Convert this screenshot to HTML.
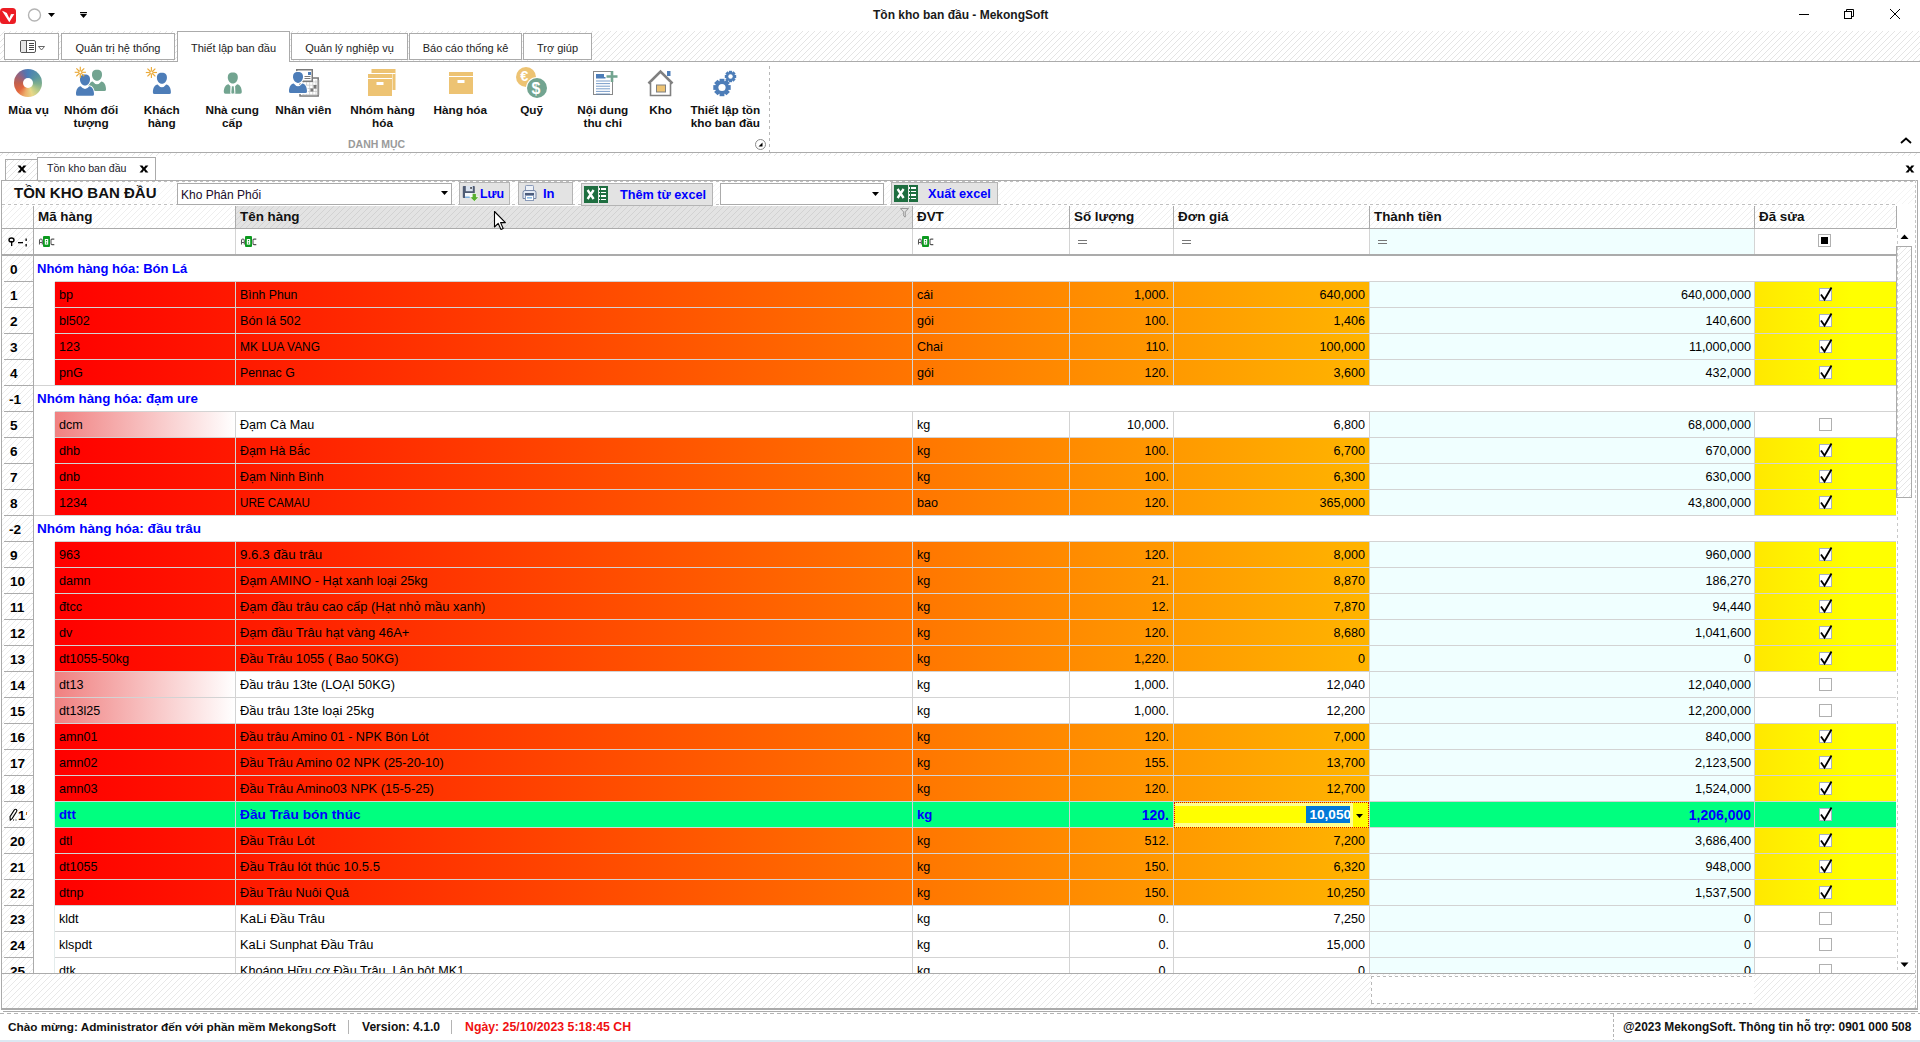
<!DOCTYPE html><html><head><meta charset="utf-8"><style>
*{margin:0;padding:0;box-sizing:border-box}
html,body{width:1920px;height:1042px;overflow:hidden;background:#fff;font-family:"Liberation Sans", sans-serif;}
body>div,body>svg{position:absolute}
.t{position:absolute;white-space:nowrap;line-height:14px;font-size:12px;color:#000}
.hatch{background-image:repeating-linear-gradient(135deg,rgba(0,0,0,0) 0px,rgba(0,0,0,0) 3.2px,#e6e6e6 3.2px,#e6e6e6 4.24px)}
</style></head><body><svg style="left:0;top:0" width="1920" height="30">
<rect x="0" y="8" width="16" height="16" rx="3.5" fill="#EC1C24"/>
<path d="M2 10.8 Q4.5 11.6 6.9 13.1 L9.3 18.3 L11 14.3 L9.6 14.3 L14.3 14.1 L9.3 22.2 Z" fill="#fff"/><path d="M7.2 13.3 L9.6 14.2 L9.6 16.6 Z" fill="#EC1C24"/>
<circle cx="34.5" cy="15" r="6" fill="none" stroke="#B4B4B4" stroke-width="1.4"/>
<path d="M48 13 L55 13 L51.5 17 Z" fill="#000"/>
<rect x="80" y="12" width="7" height="1.2" fill="#000"/>
<path d="M80 14 L87 14 L83.5 18 Z" fill="#000"/>
<rect x="1799" y="14" width="10" height="1" fill="#000"/>
<rect x="1844.5" y="11.5" width="7" height="7" fill="none" stroke="#000" stroke-width="1"/>
<path d="M1846.5 11.5 V9.5 H1853.5 V16.5 H1851.5" fill="none" stroke="#000" stroke-width="1"/>
<path d="M1890 9 L1900 19 M1900 9 L1890 19" stroke="#000" stroke-width="1"/>
</svg>
<div class="t" style="left:873px;top:7px;font-size:12px;font-weight:bold;color:#1a1a1a;line-height:16px">Tồn kho ban đầu - MekongSoft</div>
<div style="left:0px;top:31px;width:1920px;height:30px;background:#fff"></div>
<svg style="position:absolute;left:0px;top:31px" width="1920" height="30" shape-rendering="crispEdges"><defs><pattern id="hp1" patternUnits="userSpaceOnUse" x="0" y="5" width="6" height="6"><g fill="#e4e4e4"><rect x="5" y="0" width="1" height="1"/><rect x="4" y="1" width="1" height="1"/><rect x="3" y="2" width="1" height="1"/><rect x="2" y="3" width="1" height="1"/><rect x="1" y="4" width="1" height="1"/><rect x="0" y="5" width="1" height="1"/></g></pattern></defs><rect width="1920" height="30" fill="url(#hp1)"/></svg>
<div style="left:0px;top:61px;width:1920px;height:1px;background:#ABABAB"></div>
<div style="left:4px;top:33px;width:55px;height:27px;background:#fff;border:1px solid #ABABAB"></div>
<div style="left:61px;top:33px;width:114px;height:27px;background:#fff;border:1px solid #ABABAB"></div>
<div class="t" style="left:61px;width:114px;top:41px;text-align:center;font-size:11px;color:#222">Quản trị hệ thống</div>
<div style="left:177px;top:31px;width:113px;height:31px;background:#fff;border:1px solid #ABABAB;border-bottom:none"></div>
<div class="t" style="left:177px;width:113px;top:41px;text-align:center;font-size:11px;color:#222">Thiết lập ban đầu</div>
<div style="left:291px;top:33px;width:117px;height:27px;background:#fff;border:1px solid #ABABAB"></div>
<div class="t" style="left:291px;width:117px;top:41px;text-align:center;font-size:11px;color:#222">Quản lý nghiệp vụ</div>
<div style="left:409px;top:33px;width:113px;height:27px;background:#fff;border:1px solid #ABABAB"></div>
<div class="t" style="left:409px;width:113px;top:41px;text-align:center;font-size:11px;color:#222">Báo cáo thống kê</div>
<div style="left:523px;top:33px;width:69px;height:27px;background:#fff;border:1px solid #ABABAB"></div>
<div class="t" style="left:523px;width:69px;top:41px;text-align:center;font-size:11px;color:#222">Trợ giúp</div>
<svg style="left:0;top:31px" width="60" height="30">
<rect x="20.5" y="9.5" width="15" height="12" rx="1.5" fill="#fff" stroke="#555" stroke-width="1"/>
<rect x="21" y="10" width="5" height="11" fill="#e6e6e6"/>
<line x1="26.5" y1="10" x2="26.5" y2="21" stroke="#555"/>
<path d="M29 12.5h5M29 14.5h5M29 16.5h5M29 18.5h5" stroke="#444" stroke-width="1"/>
<path d="M38.5 15.5 L44.5 15.5 L41.5 19 Z" fill="none" stroke="#555" stroke-width="0.9"/>
</svg>
<div style="left:0px;top:152px;width:1920px;height:1px;background:#ABABAB"></div>
<div style="left:769px;top:66px;width:1px;height:86px;background-image:repeating-linear-gradient(180deg,#b8b8b8 0 3px,transparent 3px 6px)"></div>
<svg style="left:752px;top:136px" width="18" height="18">
<circle cx="8.5" cy="8.5" r="5" fill="#fff" stroke="#8a8a8a" stroke-width="1"/>
<path d="M6.5 10.5 L10.5 10.5 L10.5 6.5 Z" fill="#000"/>
</svg>
<svg style="left:1898px;top:134px" width="16" height="12">
<path d="M3 9 L8 4.5 L13 9" fill="none" stroke="#000" stroke-width="1.8"/>
</svg>
<div class="t" style="left:-31.4px;width:120px;top:103px;text-align:center;font-weight:bold;font-size:11.75px;line-height:14px;color:#111">Mùa vụ</div>
<div class="t" style="left:31.099999999999994px;width:120px;top:103px;text-align:center;font-weight:bold;font-size:11.75px;line-height:14px;color:#111">Nhóm đối</div>
<div class="t" style="left:31.099999999999994px;width:120px;top:116px;text-align:center;font-weight:bold;font-size:11.75px;line-height:14px;color:#111">tượng</div>
<div class="t" style="left:101.69999999999999px;width:120px;top:103px;text-align:center;font-weight:bold;font-size:11.75px;line-height:14px;color:#111">Khách</div>
<div class="t" style="left:101.69999999999999px;width:120px;top:116px;text-align:center;font-weight:bold;font-size:11.75px;line-height:14px;color:#111">hàng</div>
<div class="t" style="left:172.2px;width:120px;top:103px;text-align:center;font-weight:bold;font-size:11.75px;line-height:14px;color:#111">Nhà cung</div>
<div class="t" style="left:172.2px;width:120px;top:116px;text-align:center;font-weight:bold;font-size:11.75px;line-height:14px;color:#111">cấp</div>
<div class="t" style="left:243.39999999999998px;width:120px;top:103px;text-align:center;font-weight:bold;font-size:11.75px;line-height:14px;color:#111">Nhân viên</div>
<div class="t" style="left:322.5px;width:120px;top:103px;text-align:center;font-weight:bold;font-size:11.75px;line-height:14px;color:#111">Nhóm hàng</div>
<div class="t" style="left:322.5px;width:120px;top:116px;text-align:center;font-weight:bold;font-size:11.75px;line-height:14px;color:#111">hóa</div>
<div class="t" style="left:400.3px;width:120px;top:103px;text-align:center;font-weight:bold;font-size:11.75px;line-height:14px;color:#111">Hàng hóa</div>
<div class="t" style="left:471.6px;width:120px;top:103px;text-align:center;font-weight:bold;font-size:11.75px;line-height:14px;color:#111">Quỹ</div>
<div class="t" style="left:542.8px;width:120px;top:103px;text-align:center;font-weight:bold;font-size:11.75px;line-height:14px;color:#111">Nội dung</div>
<div class="t" style="left:542.8px;width:120px;top:116px;text-align:center;font-weight:bold;font-size:11.75px;line-height:14px;color:#111">thu chi</div>
<div class="t" style="left:600.6px;width:120px;top:103px;text-align:center;font-weight:bold;font-size:11.75px;line-height:14px;color:#111">Kho</div>
<div class="t" style="left:665.3px;width:120px;top:103px;text-align:center;font-weight:bold;font-size:11.75px;line-height:14px;color:#111">Thiết lập tồn</div>
<div class="t" style="left:665.3px;width:120px;top:116px;text-align:center;font-weight:bold;font-size:11.75px;line-height:14px;color:#111">kho ban đầu</div>
<div class="t" style="left:348px;top:137px;font-weight:bold;font-size:10.5px;color:#9a9a9a;line-height:14px">DANH MỤC</div>
<div style="left:14px;top:69px;width:28px;height:28px;border-radius:50%;background:conic-gradient(#4A7DB8 0deg,#5A96A0 55deg,#7EAE8E 95deg,#BACB88 130deg,#E8D888 160deg,#EDAE6A 195deg,#E2663E 230deg,#C2604E 270deg,#8E6486 315deg,#5E70A8 340deg,#4A7DB8 360deg)"></div>
<div style="left:23px;top:78px;width:10px;height:10px;border-radius:50%;background:#fff"></div>
<svg style="left:0;top:62px" width="780" height="50"><path d="M97.00 7.80 C100.60 7.80 102.00 9.70 102.00 12.70 C102.00 15.80 99.80 18.80 97.00 18.80 C94.20 18.80 92.00 15.80 92.00 12.70 C92.00 9.70 93.40 7.80 97.00 7.80 Z" fill="#72A490"/><path d="M88.00 27.40 Q88.00 29.00 89.60 29.00 L104.40 29.00 Q106.00 29.00 106.00 27.40 C106.00 23.20 104.20 19.70 101.30 19.50 Q97.00 25.00 92.70 19.50 C89.80 19.70 88.00 23.20 88.00 27.40 Z" fill="#72A490"/><path d="M85.00 12.60 C88.60 12.60 90.00 14.50 90.00 17.50 C90.00 20.60 87.80 23.60 85.00 23.60 C82.20 23.60 80.00 20.60 80.00 17.50 C80.00 14.50 81.40 12.60 85.00 12.60 Z" fill="#fff" stroke="#fff" stroke-width="2"/><path d="M76.00 32.20 Q76.00 33.80 77.60 33.80 L92.40 33.80 Q94.00 33.80 94.00 32.20 C94.00 28.00 92.20 24.50 89.30 24.30 Q85.00 29.80 80.70 24.30 C77.80 24.50 76.00 28.00 76.00 32.20 Z" fill="#fff" stroke="#fff" stroke-width="2"/><path d="M85.00 12.60 C88.60 12.60 90.00 14.50 90.00 17.50 C90.00 20.60 87.80 23.60 85.00 23.60 C82.20 23.60 80.00 20.60 80.00 17.50 C80.00 14.50 81.40 12.60 85.00 12.60 Z" fill="#4D7DB8"/><path d="M76.00 32.20 Q76.00 33.80 77.60 33.80 L92.40 33.80 Q94.00 33.80 94.00 32.20 C94.00 28.00 92.20 24.50 89.30 24.30 Q85.00 29.80 80.70 24.30 C77.80 24.50 76.00 28.00 76.00 32.20 Z" fill="#4D7DB8"/><line x1="82.10" y1="10.30" x2="85.90" y2="10.30" stroke="#EAAA3A" stroke-width="1.15"/><line x1="81.57" y1="11.57" x2="84.26" y2="14.26" stroke="#EAAA3A" stroke-width="1.15"/><line x1="80.30" y1="12.10" x2="80.30" y2="15.90" stroke="#EAAA3A" stroke-width="1.15"/><line x1="79.03" y1="11.57" x2="76.34" y2="14.26" stroke="#EAAA3A" stroke-width="1.15"/><line x1="78.50" y1="10.30" x2="74.70" y2="10.30" stroke="#EAAA3A" stroke-width="1.15"/><line x1="79.03" y1="9.03" x2="76.34" y2="6.34" stroke="#EAAA3A" stroke-width="1.15"/><line x1="80.30" y1="8.50" x2="80.30" y2="4.70" stroke="#EAAA3A" stroke-width="1.15"/><line x1="81.57" y1="9.03" x2="84.26" y2="6.34" stroke="#EAAA3A" stroke-width="1.15"/><circle cx="80.3" cy="10.299999999999997" r="2.1" fill="#EAAA3A"/><circle cx="80.3" cy="10.299999999999997" r="1.1" fill="#fff"/><path d="M161.90 10.80 C165.50 10.80 166.90 12.70 166.90 15.70 C166.90 18.80 164.70 21.80 161.90 21.80 C159.10 21.80 156.90 18.80 156.90 15.70 C156.90 12.70 158.30 10.80 161.90 10.80 Z" fill="#4D7DB8"/><path d="M152.90 30.40 Q152.90 32.00 154.50 32.00 L169.30 32.00 Q170.90 32.00 170.90 30.40 C170.90 26.20 169.10 22.70 166.20 22.50 Q161.90 28.00 157.60 22.50 C154.70 22.70 152.90 26.20 152.90 30.40 Z" fill="#4D7DB8"/><line x1="153.20" y1="10.50" x2="157.00" y2="10.50" stroke="#EAAA3A" stroke-width="1.15"/><line x1="152.67" y1="11.77" x2="155.36" y2="14.46" stroke="#EAAA3A" stroke-width="1.15"/><line x1="151.40" y1="12.30" x2="151.40" y2="16.10" stroke="#EAAA3A" stroke-width="1.15"/><line x1="150.13" y1="11.77" x2="147.44" y2="14.46" stroke="#EAAA3A" stroke-width="1.15"/><line x1="149.60" y1="10.50" x2="145.80" y2="10.50" stroke="#EAAA3A" stroke-width="1.15"/><line x1="150.13" y1="9.23" x2="147.44" y2="6.54" stroke="#EAAA3A" stroke-width="1.15"/><line x1="151.40" y1="8.70" x2="151.40" y2="4.90" stroke="#EAAA3A" stroke-width="1.15"/><line x1="152.67" y1="9.23" x2="155.36" y2="6.54" stroke="#EAAA3A" stroke-width="1.15"/><circle cx="151.4" cy="10.5" r="2.1" fill="#EAAA3A"/><circle cx="151.4" cy="10.5" r="1.1" fill="#fff"/><path d="M232.80 10.50 C236.40 10.50 237.80 12.40 237.80 15.40 C237.80 18.50 235.60 21.50 232.80 21.50 C230.00 21.50 227.80 18.50 227.80 15.40 C227.80 12.40 229.20 10.50 232.80 10.50 Z" fill="#72A490"/><path d="M223.80 30.10 Q223.80 31.70 225.40 31.70 L240.20 31.70 Q241.80 31.70 241.80 30.10 C241.80 25.90 240.00 22.40 237.10 22.20 Q232.80 27.70 228.50 22.20 C225.60 22.40 223.80 25.90 223.80 30.10 Z" fill="#72A490"/><path d="M230.50 23.10 L235.10 23.10 L235.40 31.70 L230.20 31.70 Z" fill="#fff"/><path d="M231.90 24.30 L233.70 24.30 L234.30 30.70 L232.80 31.70 L231.30 30.70 Z" fill="#72A490"/><rect x="300" y="16" width="18.2" height="18" fill="#fff" stroke="#7a7a7a" stroke-width="1.5"/><rect x="303.2" y="18" width="0.7" height="15" fill="#c8c8c8"/><rect x="306.3" y="18" width="0.7" height="15" fill="#c8c8c8"/><rect x="309.4" y="18" width="0.7" height="15" fill="#c8c8c8"/><rect x="312.5" y="18" width="0.7" height="15" fill="#c8c8c8"/><rect x="315.6" y="18" width="0.7" height="15" fill="#c8c8c8"/><rect x="318.7" y="18" width="0.7" height="15" fill="#c8c8c8"/><rect x="302" y="19.6" width="15" height="0.7" fill="#c8c8c8"/><rect x="302" y="22.8" width="15" height="0.7" fill="#c8c8c8"/><rect x="302" y="26.0" width="15" height="0.7" fill="#c8c8c8"/><rect x="302" y="29.2" width="15" height="0.7" fill="#c8c8c8"/><rect x="302" y="32.4" width="15" height="0.7" fill="#c8c8c8"/><rect x="313.5" y="23" width="3" height="3.5" fill="#777"/><rect x="310.4" y="26.5" width="3" height="3" fill="#777"/><rect x="296.75" y="7.75" width="15.5" height="11.5" fill="#fff" stroke="#7a7a7a" stroke-width="1.5"/><rect x="307.5" y="9.5" width="3" height="3" fill="#4D7DB8" shape-rendering="crispEdges"/><path d="M304.5 14.5h6M304.5 16.5h6" stroke="#7a7a7a" stroke-width="1"/><path d="M298.00 9.90 C301.60 9.90 303.00 11.80 303.00 14.80 C303.00 17.90 300.80 20.90 298.00 20.90 C295.20 20.90 293.00 17.90 293.00 14.80 C293.00 11.80 294.40 9.90 298.00 9.90 Z" fill="#fff" stroke="#fff" stroke-width="2"/><path d="M289.00 29.50 Q289.00 31.10 290.60 31.10 L305.40 31.10 Q307.00 31.10 307.00 29.50 C307.00 25.30 305.20 21.80 302.30 21.60 Q298.00 27.10 293.70 21.60 C290.80 21.80 289.00 25.30 289.00 29.50 Z" fill="#fff" stroke="#fff" stroke-width="2"/><path d="M298.00 9.90 C301.60 9.90 303.00 11.80 303.00 14.80 C303.00 17.90 300.80 20.90 298.00 20.90 C295.20 20.90 293.00 17.90 293.00 14.80 C293.00 11.80 294.40 9.90 298.00 9.90 Z" fill="#4D7DB8"/><path d="M289.00 29.50 Q289.00 31.10 290.60 31.10 L305.40 31.10 Q307.00 31.10 307.00 29.50 C307.00 25.30 305.20 21.80 302.30 21.60 Q298.00 27.10 293.70 21.60 C290.80 21.80 289.00 25.30 289.00 29.50 Z" fill="#4D7DB8"/><rect x="371.5" y="7" width="24" height="21" fill="#EDC373"/><rect x="371.5" y="11" width="24" height="1" fill="#fff"/><rect x="367" y="11" width="25.5" height="24" fill="#fff"/><rect x="368" y="12" width="24" height="4" fill="#EDC373"/><rect x="368" y="17" width="24" height="17" fill="#EDC373"/><rect x="376.5" y="20" width="7" height="3" fill="#fff"/><rect x="449" y="10" width="24" height="4" fill="#EDC373"/><rect x="449" y="15" width="24" height="17" fill="#EDC373"/><rect x="457.5" y="18" width="7" height="3" fill="#fff"/><circle cx="526" cy="15" r="10" fill="#EDC373"/><text x="520.3" y="19.299999999999997" font-family="Liberation Sans" font-weight="bold" font-size="14.5" fill="#fff">€</text><circle cx="537" cy="26" r="11" fill="#fff"/><circle cx="537" cy="26" r="10" fill="#72A490"/><text x="531.6" y="32.2" font-family="Liberation Sans" font-weight="bold" font-size="16" fill="#fff">$</text><rect x="593.5" y="9.5" width="19" height="23" fill="#fff" stroke="#888" stroke-width="1"/><rect x="596" y="12" width="9.5" height="4.5" fill="#4D7DB8"/><rect x="596" y="18.5" width="14" height="1" fill="#4D7DB8" opacity="0.75"/><rect x="596" y="21.1" width="14" height="1" fill="#4D7DB8" opacity="0.75"/><rect x="596" y="23.7" width="14" height="1" fill="#4D7DB8" opacity="0.75"/><rect x="596" y="26.3" width="14" height="1" fill="#4D7DB8" opacity="0.75"/><rect x="596" y="28.9" width="14" height="1" fill="#4D7DB8" opacity="0.75"/><rect x="596" y="31.5" width="14" height="1" fill="#4D7DB8" opacity="0.75"/><rect x="604" y="11" width="14" height="4" fill="#fff"/><path d="M606.5 14.5 h11 M612 9 v11" stroke="#72A490" stroke-width="2.6"/><rect x="667" y="9" width="3.5" height="5" fill="#4D7DB8"/><path d="M648.5 21.5 L660.5 9.5 L672.5 21.5" fill="none" stroke="#808080" stroke-width="2.6" stroke-linejoin="miter"/><path d="M650.5 20 V33.5 H670.5 V20" fill="#fff" stroke="#808080" stroke-width="1.6"/><rect x="656.5" y="23" width="9" height="7" fill="#EDC373" stroke="#808080" stroke-width="1"/><rect x="719.59" y="16.80" width="4.82" height="5.16" fill="#4D7DB8" transform="rotate(0.0 722 25.5)"/><rect x="719.59" y="16.80" width="4.82" height="5.16" fill="#4D7DB8" transform="rotate(45.0 722 25.5)"/><rect x="719.59" y="16.80" width="4.82" height="5.16" fill="#4D7DB8" transform="rotate(90.0 722 25.5)"/><rect x="719.59" y="16.80" width="4.82" height="5.16" fill="#4D7DB8" transform="rotate(135.0 722 25.5)"/><rect x="719.59" y="16.80" width="4.82" height="5.16" fill="#4D7DB8" transform="rotate(180.0 722 25.5)"/><rect x="719.59" y="16.80" width="4.82" height="5.16" fill="#4D7DB8" transform="rotate(225.0 722 25.5)"/><rect x="719.59" y="16.80" width="4.82" height="5.16" fill="#4D7DB8" transform="rotate(270.0 722 25.5)"/><rect x="719.59" y="16.80" width="4.82" height="5.16" fill="#4D7DB8" transform="rotate(315.0 722 25.5)"/><circle cx="722" cy="25.5" r="6.71" fill="#4D7DB8"/><circle cx="722" cy="25.5" r="3.60" fill="#fff"/><rect x="728.93" y="8.80" width="3.14" height="3.36" fill="#4D7DB8" transform="rotate(0.0 730.5 14.5)"/><rect x="728.93" y="8.80" width="3.14" height="3.36" fill="#4D7DB8" transform="rotate(45.0 730.5 14.5)"/><rect x="728.93" y="8.80" width="3.14" height="3.36" fill="#4D7DB8" transform="rotate(90.0 730.5 14.5)"/><rect x="728.93" y="8.80" width="3.14" height="3.36" fill="#4D7DB8" transform="rotate(135.0 730.5 14.5)"/><rect x="728.93" y="8.80" width="3.14" height="3.36" fill="#4D7DB8" transform="rotate(180.0 730.5 14.5)"/><rect x="728.93" y="8.80" width="3.14" height="3.36" fill="#4D7DB8" transform="rotate(225.0 730.5 14.5)"/><rect x="728.93" y="8.80" width="3.14" height="3.36" fill="#4D7DB8" transform="rotate(270.0 730.5 14.5)"/><rect x="728.93" y="8.80" width="3.14" height="3.36" fill="#4D7DB8" transform="rotate(315.0 730.5 14.5)"/><circle cx="730.5" cy="14.5" r="4.37" fill="#4D7DB8"/><circle cx="730.5" cy="14.5" r="2.20" fill="#fff"/></svg>
<svg style="position:absolute;left:0px;top:153px" width="1920" height="3" shape-rendering="crispEdges"><defs><pattern id="hp2" patternUnits="userSpaceOnUse" x="0" y="3" width="6" height="6"><g fill="#e4e4e4"><rect x="5" y="0" width="1" height="1"/><rect x="4" y="1" width="1" height="1"/><rect x="3" y="2" width="1" height="1"/><rect x="2" y="3" width="1" height="1"/><rect x="1" y="4" width="1" height="1"/><rect x="0" y="5" width="1" height="1"/></g></pattern></defs><rect width="1920" height="3" fill="url(#hp2)"/></svg>
<svg style="position:absolute;left:6px;top:160px" width="31" height="20" shape-rendering="crispEdges"><defs><pattern id="hp3" patternUnits="userSpaceOnUse" x="0" y="2" width="6" height="6"><g fill="#e4e4e4"><rect x="5" y="0" width="1" height="1"/><rect x="4" y="1" width="1" height="1"/><rect x="3" y="2" width="1" height="1"/><rect x="2" y="3" width="1" height="1"/><rect x="1" y="4" width="1" height="1"/><rect x="0" y="5" width="1" height="1"/></g></pattern></defs><rect width="31" height="20" fill="url(#hp3)"/></svg>
<div style="left:5px;top:159px;width:33px;height:22px;border:1px solid #ABABAB;border-bottom:none"></div>
<div style="left:37px;top:157px;width:119px;height:24px;background:#fff;border:1px solid #ABABAB;border-bottom:none"></div>
<div class="t" style="left:47px;top:161px;font-size:10.6px;color:#1a1a2a">Tồn kho ban đầu</div>
<svg style="left:17px;top:165px" width="11" height="9"><path d="M0.5 0.5 H3.4 L4.95 2.55 L6.5 0.5 H9.4 L6.4 3.9 L9.4 7.4 H6.5 L4.95 5.3 L3.4 7.4 H0.5 L3.5 3.9 Z" fill="#000"/></svg>
<svg style="left:139px;top:165px" width="11" height="9"><path d="M0.5 0.5 H3.4 L4.95 2.55 L6.5 0.5 H9.4 L6.4 3.9 L9.4 7.4 H6.5 L4.95 5.3 L3.4 7.4 H0.5 L3.5 3.9 Z" fill="#000"/></svg>
<svg style="left:1904.5px;top:164.5px" width="11" height="9"><path d="M0.5 0.5 H3.4 L4.95 2.55 L6.5 0.5 H9.4 L6.4 3.9 L9.4 7.4 H6.5 L4.95 5.3 L3.4 7.4 H0.5 L3.5 3.9 Z" fill="#000"/></svg>
<div style="left:1px;top:180px;width:1917px;height:830px;background:#fff;border:1px solid #ABABAB"></div>
<div style="left:1915px;top:180px;width:1px;height:830px;background-image:repeating-linear-gradient(180deg,#c8c8c8 0 3px,transparent 3px 5px)"></div>
<div style="left:38px;top:181px;width:1877px;height:1px;background-image:repeating-linear-gradient(90deg,#c0c0c0 0 3px,transparent 3px 6px)"></div>
<svg style="position:absolute;left:3px;top:182px" width="1912" height="22" shape-rendering="crispEdges"><defs><pattern id="hp4" patternUnits="userSpaceOnUse" x="3" y="4" width="6" height="6"><g fill="#f4f4f4"><rect x="5" y="0" width="1" height="1"/><rect x="4" y="1" width="1" height="1"/><rect x="3" y="2" width="1" height="1"/><rect x="2" y="3" width="1" height="1"/><rect x="1" y="4" width="1" height="1"/><rect x="0" y="5" width="1" height="1"/></g></pattern></defs><rect width="1912" height="22" fill="url(#hp4)"/></svg>
<div style="left:2px;top:204px;width:1894px;height:1px;background-image:repeating-linear-gradient(90deg,#c0c0c0 0 3px,transparent 3px 6px)"></div>
<div class="t" style="left:14px;top:184px;font-size:15px;font-weight:bold;line-height:18px;color:#111">TỒN KHO BAN ĐẦU</div>
<div style="left:177px;top:183px;width:275px;height:22px;background:#fff;border:1px solid #ABABAB"></div>
<div class="t" style="left:181px;top:188px;font-size:12px;color:#1a0a2a">Kho Phân Phối</div>
<svg style="left:440px;top:190px" width="10" height="6"><path d="M1 1 L8 1 L4.5 5 Z" fill="#000"/></svg>
<div style="left:459px;top:182px;width:51px;height:23px;background:#E3E3E3;border:1px solid #B4B4B4"></div>
<div style="left:518px;top:182px;width:55px;height:23px;background:#E3E3E3;border:1px solid #B4B4B4"></div>
<div style="left:581px;top:183px;width:132px;height:23px;background:#E3E3E3;border:1px solid #B4B4B4"></div>
<div style="left:891px;top:182px;width:107px;height:23px;background:#E3E3E3;border:1px solid #B4B4B4"></div>
<div style="left:720px;top:183px;width:164px;height:22px;background:#fff;border:1px solid #ABABAB"></div>
<svg style="left:871px;top:191px" width="10" height="6"><path d="M1 1 L8 1 L4.5 5 Z" fill="#000"/></svg>
<div class="t" style="left:480px;top:186px;font-size:12.4px;font-weight:bold;color:#0000FF;line-height:16px">Lưu</div>
<div class="t" style="left:543px;top:186px;font-size:13px;font-weight:bold;color:#0000FF;line-height:16px">In</div>
<div class="t" style="left:620px;top:187px;font-size:12.7px;font-weight:bold;color:#0000FF;line-height:16px">Thêm từ excel</div>
<div class="t" style="left:928px;top:186px;font-size:12.7px;font-weight:bold;color:#0000FF;line-height:16px">Xuất excel</div>
<svg style="left:462px;top:185px" width="18" height="17">
<rect x="0.8" y="1" width="12" height="12" rx="0.8" fill="#4F5B73"/>
<rect x="3.8" y="1" width="7" height="5.2" fill="#DCE4F0"/>
<rect x="8.3" y="2.2" width="1.5" height="1.5" fill="#111"/>
<rect x="3" y="8" width="8" height="5" fill="#F4F8FC"/>
<rect x="3" y="11.5" width="5" height="1.5" fill="#7FB0E0"/>
<path d="M10.2 8.5 h4.2 v3.4 h2.6 l-4.7 4.6 l-4.7 -4.6 h2.6 z" fill="#58B030" stroke="#fff" stroke-width="0.7"/>
</svg>
<svg style="left:521px;top:184px" width="17" height="18">
<rect x="4.5" y="1.5" width="8" height="8" rx="0.8" fill="#EEF2F8" stroke="#8A9AB8" stroke-width="1"/>
<path d="M2 14.5 V8.5 Q2 6.5 4 6.5 H13 Q15 6.5 15 8.5 V14.5 Z" fill="#E4EAF4" stroke="#7686A6" stroke-width="1"/>
<rect x="4" y="9" width="9" height="2" fill="#4C5C7C"/>
<rect x="4.5" y="11.5" width="8" height="5" fill="#fff" stroke="#8A9AB8" stroke-width="1"/>
<rect x="6" y="13" width="5" height="1.6" fill="#8DBBE6"/>
</svg>
<svg style="left:584px;top:186px" width="26" height="19" shape-rendering="crispEdges">
<rect x="0" y="0" width="13.5" height="17" fill="#1E6E40"/>
<rect x="14.5" y="0" width="9.5" height="17" fill="#1E6E40"/>
<rect x="16.5" y="2" width="5.5" height="1.6" fill="#fff"/>
<rect x="16.5" y="5.6" width="5.5" height="1.6" fill="#fff"/>
<rect x="16.5" y="9.2" width="5.5" height="1.6" fill="#fff"/>
<rect x="16.5" y="12.8" width="5.5" height="1.6" fill="#fff"/>
<rect x="15" y="2" width="1" height="1.6" fill="#fff"/>
<rect x="15" y="5.6" width="1" height="1.6" fill="#fff"/>
<rect x="15" y="9.2" width="1" height="1.6" fill="#fff"/>
<rect x="15" y="12.8" width="1" height="1.6" fill="#fff"/>
<path d="M3.6 4 L9.6 13 M9.6 4 L3.6 13" stroke="#fff" stroke-width="2.3" shape-rendering="geometricPrecision"/>
</svg>
<svg style="left:894px;top:185px" width="26" height="19" shape-rendering="crispEdges">
<rect x="0" y="0" width="13.5" height="17" fill="#1E6E40"/>
<rect x="14.5" y="0" width="9.5" height="17" fill="#1E6E40"/>
<rect x="16.5" y="2" width="5.5" height="1.6" fill="#fff"/>
<rect x="16.5" y="5.6" width="5.5" height="1.6" fill="#fff"/>
<rect x="16.5" y="9.2" width="5.5" height="1.6" fill="#fff"/>
<rect x="16.5" y="12.8" width="5.5" height="1.6" fill="#fff"/>
<rect x="15" y="2" width="1" height="1.6" fill="#fff"/>
<rect x="15" y="5.6" width="1" height="1.6" fill="#fff"/>
<rect x="15" y="9.2" width="1" height="1.6" fill="#fff"/>
<rect x="15" y="12.8" width="1" height="1.6" fill="#fff"/>
<path d="M3.6 4 L9.6 13 M9.6 4 L3.6 13" stroke="#fff" stroke-width="2.3" shape-rendering="geometricPrecision"/>
</svg>
<svg style="position:absolute;left:2px;top:206px" width="1894" height="22" shape-rendering="crispEdges"><defs><pattern id="hp5" patternUnits="userSpaceOnUse" x="4" y="4" width="6" height="6"><g fill="#eeeeee"><rect x="5" y="0" width="1" height="1"/><rect x="4" y="1" width="1" height="1"/><rect x="3" y="2" width="1" height="1"/><rect x="2" y="3" width="1" height="1"/><rect x="1" y="4" width="1" height="1"/><rect x="0" y="5" width="1" height="1"/></g></pattern></defs><rect width="1894" height="22" fill="url(#hp5)"/></svg>
<svg style="position:absolute;left:236px;top:206px" width="676" height="22" shape-rendering="crispEdges"><defs><pattern id="hp6" patternUnits="userSpaceOnUse" x="4" y="4" width="6" height="6"><g fill="#d2d2d2"><rect x="5" y="0" width="1" height="1"/><rect x="4" y="1" width="1" height="1"/><rect x="3" y="2" width="1" height="1"/><rect x="2" y="3" width="1" height="1"/><rect x="1" y="4" width="1" height="1"/><rect x="0" y="5" width="1" height="1"/></g></pattern></defs><rect width="676" height="22" fill="#E3E3E3"/><rect width="676" height="22" fill="url(#hp6)"/></svg>
<div style="left:2px;top:228px;width:1894px;height:1px;background:#ABABAB"></div>
<div style="left:33px;top:206px;width:1px;height:22px;background:#ABABAB"></div>
<div style="left:235px;top:206px;width:1px;height:22px;background:#ABABAB"></div>
<div style="left:912px;top:206px;width:1px;height:22px;background:#ABABAB"></div>
<div style="left:1069px;top:206px;width:1px;height:22px;background:#ABABAB"></div>
<div style="left:1173px;top:206px;width:1px;height:22px;background:#ABABAB"></div>
<div style="left:1369px;top:206px;width:1px;height:22px;background:#ABABAB"></div>
<div style="left:1754px;top:206px;width:1px;height:22px;background:#ABABAB"></div>
<div style="left:1896px;top:206px;width:1px;height:22px;background:#ABABAB"></div>
<div class="t" style="left:38px;top:209px;font-size:13.4px;font-weight:bold;color:#111;line-height:16px">Mã hàng</div>
<div class="t" style="left:240px;top:209px;font-size:13.4px;font-weight:bold;color:#111;line-height:16px">Tên hàng</div>
<div class="t" style="left:917px;top:209px;font-size:13.4px;font-weight:bold;color:#111;line-height:16px">ĐVT</div>
<div class="t" style="left:1074px;top:209px;font-size:13.4px;font-weight:bold;color:#111;line-height:16px">Số lượng</div>
<div class="t" style="left:1178px;top:209px;font-size:13.4px;font-weight:bold;color:#111;line-height:16px">Đơn giá</div>
<div class="t" style="left:1374px;top:209px;font-size:13.4px;font-weight:bold;color:#111;line-height:16px">Thành tiền</div>
<div class="t" style="left:1759px;top:209px;font-size:13.4px;font-weight:bold;color:#111;line-height:16px">Đã sửa</div>
<svg style="left:899px;top:207px" width="12" height="12"><path d="M1.5 1.5 H9.5 L6.3 5 V10 L4.7 9 V5 Z" fill="none" stroke="#9a9a9a" stroke-width="1"/></svg>
<svg style="position:absolute;left:2px;top:229px" width="31" height="25" shape-rendering="crispEdges"><defs><pattern id="hp7" patternUnits="userSpaceOnUse" x="4" y="5" width="6" height="6"><g fill="#ebebeb"><rect x="5" y="0" width="1" height="1"/><rect x="4" y="1" width="1" height="1"/><rect x="3" y="2" width="1" height="1"/><rect x="2" y="3" width="1" height="1"/><rect x="1" y="4" width="1" height="1"/><rect x="0" y="5" width="1" height="1"/></g></pattern></defs><rect width="31" height="25" fill="url(#hp7)"/></svg>
<div style="left:1370px;top:229px;width:384px;height:25px;background:#F0FFFF"></div>
<div style="left:235px;top:229px;width:1px;height:25px;background:#D4D4D4"></div>
<div style="left:912px;top:229px;width:1px;height:25px;background:#D4D4D4"></div>
<div style="left:1069px;top:229px;width:1px;height:25px;background:#D4D4D4"></div>
<div style="left:1173px;top:229px;width:1px;height:25px;background:#D4D4D4"></div>
<div style="left:1369px;top:229px;width:1px;height:25px;background:#D4D4D4"></div>
<div style="left:1754px;top:229px;width:1px;height:25px;background:#D4D4D4"></div>
<div style="left:33px;top:229px;width:1px;height:26px;background:#ABABAB"></div>
<div style="left:2px;top:254px;width:1894px;height:2px;background:#ABABAB"></div>
<svg style="left:38px;top:236px" width="18" height="12">
<path d="M1.5 8.6 V4.9 Q1.5 3 2.9 3 Q4.3 3 4.3 4.9 V8.6 M1.5 6.4 H4.3" fill="none" stroke="#555" stroke-width="1.05"/>
<rect x="5" y="0" width="7" height="11" rx="1" fill="#0C9A1F"/>
<rect x="6.8" y="3" width="3.4" height="5.6" fill="#fff"/>
<rect x="7.9" y="4" width="1.2" height="1.2" fill="#0C9A1F"/>
<rect x="7.9" y="6.4" width="1.2" height="1.2" fill="#0C9A1F"/>
<path d="M16.3 3.1 H14 Q13 3.1 13 4.1 V7.6 Q13 8.6 14 8.6 H16.3" fill="none" stroke="#555" stroke-width="1.05"/>
</svg>
<svg style="left:240px;top:236px" width="18" height="12">
<path d="M1.5 8.6 V4.9 Q1.5 3 2.9 3 Q4.3 3 4.3 4.9 V8.6 M1.5 6.4 H4.3" fill="none" stroke="#555" stroke-width="1.05"/>
<rect x="5" y="0" width="7" height="11" rx="1" fill="#0C9A1F"/>
<rect x="6.8" y="3" width="3.4" height="5.6" fill="#fff"/>
<rect x="7.9" y="4" width="1.2" height="1.2" fill="#0C9A1F"/>
<rect x="7.9" y="6.4" width="1.2" height="1.2" fill="#0C9A1F"/>
<path d="M16.3 3.1 H14 Q13 3.1 13 4.1 V7.6 Q13 8.6 14 8.6 H16.3" fill="none" stroke="#555" stroke-width="1.05"/>
</svg>
<svg style="left:917px;top:236px" width="18" height="12">
<path d="M1.5 8.6 V4.9 Q1.5 3 2.9 3 Q4.3 3 4.3 4.9 V8.6 M1.5 6.4 H4.3" fill="none" stroke="#555" stroke-width="1.05"/>
<rect x="5" y="0" width="7" height="11" rx="1" fill="#0C9A1F"/>
<rect x="6.8" y="3" width="3.4" height="5.6" fill="#fff"/>
<rect x="7.9" y="4" width="1.2" height="1.2" fill="#0C9A1F"/>
<rect x="7.9" y="6.4" width="1.2" height="1.2" fill="#0C9A1F"/>
<path d="M16.3 3.1 H14 Q13 3.1 13 4.1 V7.6 Q13 8.6 14 8.6 H16.3" fill="none" stroke="#555" stroke-width="1.05"/>
</svg>
<div style="left:1078px;top:240px;width:9px;height:4px;border-top:1px solid #777;border-bottom:1px solid #777"></div>
<div style="left:1182px;top:240px;width:9px;height:4px;border-top:1px solid #777;border-bottom:1px solid #777"></div>
<div style="left:1378px;top:240px;width:9px;height:4px;border-top:1px solid #777;border-bottom:1px solid #777"></div>
<svg style="left:1818px;top:234px" width="14" height="14"><rect x="0.5" y="0.5" width="12" height="12" fill="#fff" stroke="#B0B0B0"/><rect x="3" y="3" width="7" height="7" fill="#000"/></svg>
<svg style="left:6px;top:236px" width="26" height="14">
<ellipse cx="5.5" cy="4" rx="2.5" ry="2" fill="none" stroke="#000" stroke-width="1.4"/>
<rect x="5" y="5" width="1.3" height="5" fill="#000"/>
<rect x="12" y="6" width="5" height="1.3" fill="#000"/>
<rect x="19.5" y="2.5" width="1.3" height="2.5" fill="#000"/>
<rect x="19.5" y="8" width="1.3" height="2.5" fill="#000"/>
</svg>
<div style="left:2px;top:256px;width:1894px;height:717px;overflow:hidden"><svg style="position:absolute;left:0px;top:0px" width="31" height="26" shape-rendering="crispEdges"><defs><pattern id="hp8" patternUnits="userSpaceOnUse" x="4" y="2" width="6" height="6"><g fill="#ebebeb"><rect x="5" y="0" width="1" height="1"/><rect x="4" y="1" width="1" height="1"/><rect x="3" y="2" width="1" height="1"/><rect x="2" y="3" width="1" height="1"/><rect x="1" y="4" width="1" height="1"/><rect x="0" y="5" width="1" height="1"/></g></pattern></defs><rect width="31" height="26" fill="url(#hp8)"/></svg><div style="position:absolute;left:2px;top:25px;width:29px;height:1px;background:#ABABAB"></div><div style="position:absolute;left:31px;top:0px;width:1px;height:26px;background:#ABABAB"></div><div class="t" style="left:8px;top:6px;font-size:13.6px;font-weight:bold;line-height:15px">0</div><div style="position:absolute;left:53px;top:25px;width:1841px;height:1px;background:#D3D3D3"></div><div class="t" style="left:35px;top:5px;font-size:13.0px;font-weight:bold;color:#0000FF;line-height:16px">Nhóm hàng hóa: Bón Lá</div><svg style="position:absolute;left:0px;top:26px" width="31" height="26" shape-rendering="crispEdges"><defs><pattern id="hp9" patternUnits="userSpaceOnUse" x="4" y="0" width="6" height="6"><g fill="#ebebeb"><rect x="5" y="0" width="1" height="1"/><rect x="4" y="1" width="1" height="1"/><rect x="3" y="2" width="1" height="1"/><rect x="2" y="3" width="1" height="1"/><rect x="1" y="4" width="1" height="1"/><rect x="0" y="5" width="1" height="1"/></g></pattern></defs><rect width="31" height="26" fill="url(#hp9)"/></svg><div style="position:absolute;left:2px;top:51px;width:29px;height:1px;background:#ABABAB"></div><div style="position:absolute;left:31px;top:26px;width:1px;height:26px;background:#ABABAB"></div><div class="t" style="left:8px;top:32px;font-size:13.6px;font-weight:bold;line-height:15px">1</div><div style="position:absolute;left:53px;top:26px;width:1314px;height:26px;background:linear-gradient(90deg,#FF0000 0px,#FFB400 1314px)"></div><div style="position:absolute;left:1368px;top:26px;width:384px;height:26px;background:#F0FFFF"></div><div style="position:absolute;left:1753px;top:26px;width:141px;height:26px;background:linear-gradient(90deg,#FFE800,#FFFF00 68%)"></div><div style="position:absolute;left:53px;top:51px;width:1841px;height:1px;background:#D3D3D3"></div><div style="position:absolute;left:233px;top:26px;width:1px;height:26px;background:#D3D3D3"></div><div style="position:absolute;left:910px;top:26px;width:1px;height:26px;background:#D3D3D3"></div><div style="position:absolute;left:1067px;top:26px;width:1px;height:26px;background:#D3D3D3"></div><div style="position:absolute;left:1171px;top:26px;width:1px;height:26px;background:#D3D3D3"></div><div style="position:absolute;left:1367px;top:26px;width:1px;height:26px;background:#D3D3D3"></div><div style="position:absolute;left:1752px;top:26px;width:1px;height:26px;background:#D3D3D3"></div><div style="position:absolute;left:52px;top:26px;width:1px;height:26px;background:#E4ECEC"></div><div class="t" style="left:57px;top:31px;font-size:12.6px;line-height:16px;color:#000">bp</div><div class="t" style="left:238px;top:31px;font-size:12.6px;line-height:16px;color:#000;transform:scaleX(0.977);transform-origin:0 0">Bình Phun</div><div class="t" style="left:915px;top:31px;font-size:12.6px;line-height:16px;color:#000">cái</div><div class="t" style="left:1068px;width:99px;text-align:right;top:31px;font-size:12.6px;line-height:16px;color:#000">1,000.</div><div class="t" style="left:1172px;width:191px;text-align:right;top:31px;font-size:12.6px;line-height:16px;color:#000">640,000</div><div class="t" style="left:1368px;width:381px;text-align:right;top:31px;font-size:12.6px;line-height:16px;color:#000">640,000,000</div><svg style="position:absolute;left:1817px;top:30px" width="16" height="17"><rect x="0.5" y="2.5" width="12" height="12" fill="#fff" stroke="#A8B0C4"/><path d="M2 8.5 L5.5 13.5 L12.5 1.5" fill="none" stroke="#000" stroke-width="1.8"/></svg><svg style="position:absolute;left:0px;top:52px" width="31" height="26" shape-rendering="crispEdges"><defs><pattern id="hp10" patternUnits="userSpaceOnUse" x="4" y="4" width="6" height="6"><g fill="#ebebeb"><rect x="5" y="0" width="1" height="1"/><rect x="4" y="1" width="1" height="1"/><rect x="3" y="2" width="1" height="1"/><rect x="2" y="3" width="1" height="1"/><rect x="1" y="4" width="1" height="1"/><rect x="0" y="5" width="1" height="1"/></g></pattern></defs><rect width="31" height="26" fill="url(#hp10)"/></svg><div style="position:absolute;left:2px;top:77px;width:29px;height:1px;background:#ABABAB"></div><div style="position:absolute;left:31px;top:52px;width:1px;height:26px;background:#ABABAB"></div><div class="t" style="left:8px;top:58px;font-size:13.6px;font-weight:bold;line-height:15px">2</div><div style="position:absolute;left:53px;top:52px;width:1314px;height:26px;background:linear-gradient(90deg,#FF0000 0px,#FFB400 1314px)"></div><div style="position:absolute;left:1368px;top:52px;width:384px;height:26px;background:#F0FFFF"></div><div style="position:absolute;left:1753px;top:52px;width:141px;height:26px;background:linear-gradient(90deg,#FFE800,#FFFF00 68%)"></div><div style="position:absolute;left:53px;top:77px;width:1841px;height:1px;background:#D3D3D3"></div><div style="position:absolute;left:233px;top:52px;width:1px;height:26px;background:#D3D3D3"></div><div style="position:absolute;left:910px;top:52px;width:1px;height:26px;background:#D3D3D3"></div><div style="position:absolute;left:1067px;top:52px;width:1px;height:26px;background:#D3D3D3"></div><div style="position:absolute;left:1171px;top:52px;width:1px;height:26px;background:#D3D3D3"></div><div style="position:absolute;left:1367px;top:52px;width:1px;height:26px;background:#D3D3D3"></div><div style="position:absolute;left:1752px;top:52px;width:1px;height:26px;background:#D3D3D3"></div><div style="position:absolute;left:52px;top:52px;width:1px;height:26px;background:#E4ECEC"></div><div class="t" style="left:57px;top:57px;font-size:12.6px;line-height:16px;color:#000">bl502</div><div class="t" style="left:238px;top:57px;font-size:12.6px;line-height:16px;color:#000;transform:scaleX(1.008);transform-origin:0 0">Bón lá 502</div><div class="t" style="left:915px;top:57px;font-size:12.6px;line-height:16px;color:#000">gói</div><div class="t" style="left:1068px;width:99px;text-align:right;top:57px;font-size:12.6px;line-height:16px;color:#000">100.</div><div class="t" style="left:1172px;width:191px;text-align:right;top:57px;font-size:12.6px;line-height:16px;color:#000">1,406</div><div class="t" style="left:1368px;width:381px;text-align:right;top:57px;font-size:12.6px;line-height:16px;color:#000">140,600</div><svg style="position:absolute;left:1817px;top:56px" width="16" height="17"><rect x="0.5" y="2.5" width="12" height="12" fill="#fff" stroke="#A8B0C4"/><path d="M2 8.5 L5.5 13.5 L12.5 1.5" fill="none" stroke="#000" stroke-width="1.8"/></svg><svg style="position:absolute;left:0px;top:78px" width="31" height="26" shape-rendering="crispEdges"><defs><pattern id="hp11" patternUnits="userSpaceOnUse" x="4" y="2" width="6" height="6"><g fill="#ebebeb"><rect x="5" y="0" width="1" height="1"/><rect x="4" y="1" width="1" height="1"/><rect x="3" y="2" width="1" height="1"/><rect x="2" y="3" width="1" height="1"/><rect x="1" y="4" width="1" height="1"/><rect x="0" y="5" width="1" height="1"/></g></pattern></defs><rect width="31" height="26" fill="url(#hp11)"/></svg><div style="position:absolute;left:2px;top:103px;width:29px;height:1px;background:#ABABAB"></div><div style="position:absolute;left:31px;top:78px;width:1px;height:26px;background:#ABABAB"></div><div class="t" style="left:8px;top:84px;font-size:13.6px;font-weight:bold;line-height:15px">3</div><div style="position:absolute;left:53px;top:78px;width:1314px;height:26px;background:linear-gradient(90deg,#FF0000 0px,#FFB400 1314px)"></div><div style="position:absolute;left:1368px;top:78px;width:384px;height:26px;background:#F0FFFF"></div><div style="position:absolute;left:1753px;top:78px;width:141px;height:26px;background:linear-gradient(90deg,#FFE800,#FFFF00 68%)"></div><div style="position:absolute;left:53px;top:103px;width:1841px;height:1px;background:#D3D3D3"></div><div style="position:absolute;left:233px;top:78px;width:1px;height:26px;background:#D3D3D3"></div><div style="position:absolute;left:910px;top:78px;width:1px;height:26px;background:#D3D3D3"></div><div style="position:absolute;left:1067px;top:78px;width:1px;height:26px;background:#D3D3D3"></div><div style="position:absolute;left:1171px;top:78px;width:1px;height:26px;background:#D3D3D3"></div><div style="position:absolute;left:1367px;top:78px;width:1px;height:26px;background:#D3D3D3"></div><div style="position:absolute;left:1752px;top:78px;width:1px;height:26px;background:#D3D3D3"></div><div style="position:absolute;left:52px;top:78px;width:1px;height:26px;background:#E4ECEC"></div><div class="t" style="left:57px;top:83px;font-size:12.6px;line-height:16px;color:#000">123</div><div class="t" style="left:238px;top:83px;font-size:12.6px;line-height:16px;color:#000;transform:scaleX(0.947);transform-origin:0 0">MK LUA VANG</div><div class="t" style="left:915px;top:83px;font-size:12.6px;line-height:16px;color:#000">Chai</div><div class="t" style="left:1068px;width:99px;text-align:right;top:83px;font-size:12.6px;line-height:16px;color:#000">110.</div><div class="t" style="left:1172px;width:191px;text-align:right;top:83px;font-size:12.6px;line-height:16px;color:#000">100,000</div><div class="t" style="left:1368px;width:381px;text-align:right;top:83px;font-size:12.6px;line-height:16px;color:#000">11,000,000</div><svg style="position:absolute;left:1817px;top:82px" width="16" height="17"><rect x="0.5" y="2.5" width="12" height="12" fill="#fff" stroke="#A8B0C4"/><path d="M2 8.5 L5.5 13.5 L12.5 1.5" fill="none" stroke="#000" stroke-width="1.8"/></svg><svg style="position:absolute;left:0px;top:104px" width="31" height="26" shape-rendering="crispEdges"><defs><pattern id="hp12" patternUnits="userSpaceOnUse" x="4" y="0" width="6" height="6"><g fill="#ebebeb"><rect x="5" y="0" width="1" height="1"/><rect x="4" y="1" width="1" height="1"/><rect x="3" y="2" width="1" height="1"/><rect x="2" y="3" width="1" height="1"/><rect x="1" y="4" width="1" height="1"/><rect x="0" y="5" width="1" height="1"/></g></pattern></defs><rect width="31" height="26" fill="url(#hp12)"/></svg><div style="position:absolute;left:2px;top:129px;width:29px;height:1px;background:#ABABAB"></div><div style="position:absolute;left:31px;top:104px;width:1px;height:26px;background:#ABABAB"></div><div class="t" style="left:8px;top:110px;font-size:13.6px;font-weight:bold;line-height:15px">4</div><div style="position:absolute;left:53px;top:104px;width:1314px;height:26px;background:linear-gradient(90deg,#FF0000 0px,#FFB400 1314px)"></div><div style="position:absolute;left:1368px;top:104px;width:384px;height:26px;background:#F0FFFF"></div><div style="position:absolute;left:1753px;top:104px;width:141px;height:26px;background:linear-gradient(90deg,#FFE800,#FFFF00 68%)"></div><div style="position:absolute;left:53px;top:129px;width:1841px;height:1px;background:#D3D3D3"></div><div style="position:absolute;left:233px;top:104px;width:1px;height:26px;background:#D3D3D3"></div><div style="position:absolute;left:910px;top:104px;width:1px;height:26px;background:#D3D3D3"></div><div style="position:absolute;left:1067px;top:104px;width:1px;height:26px;background:#D3D3D3"></div><div style="position:absolute;left:1171px;top:104px;width:1px;height:26px;background:#D3D3D3"></div><div style="position:absolute;left:1367px;top:104px;width:1px;height:26px;background:#D3D3D3"></div><div style="position:absolute;left:1752px;top:104px;width:1px;height:26px;background:#D3D3D3"></div><div style="position:absolute;left:52px;top:104px;width:1px;height:26px;background:#E4ECEC"></div><div class="t" style="left:57px;top:109px;font-size:12.6px;line-height:16px;color:#000">pnG</div><div class="t" style="left:238px;top:109px;font-size:12.6px;line-height:16px;color:#000;transform:scaleX(0.978);transform-origin:0 0">Pennac G</div><div class="t" style="left:915px;top:109px;font-size:12.6px;line-height:16px;color:#000">gói</div><div class="t" style="left:1068px;width:99px;text-align:right;top:109px;font-size:12.6px;line-height:16px;color:#000">120.</div><div class="t" style="left:1172px;width:191px;text-align:right;top:109px;font-size:12.6px;line-height:16px;color:#000">3,600</div><div class="t" style="left:1368px;width:381px;text-align:right;top:109px;font-size:12.6px;line-height:16px;color:#000">432,000</div><svg style="position:absolute;left:1817px;top:108px" width="16" height="17"><rect x="0.5" y="2.5" width="12" height="12" fill="#fff" stroke="#A8B0C4"/><path d="M2 8.5 L5.5 13.5 L12.5 1.5" fill="none" stroke="#000" stroke-width="1.8"/></svg><svg style="position:absolute;left:0px;top:130px" width="31" height="26" shape-rendering="crispEdges"><defs><pattern id="hp13" patternUnits="userSpaceOnUse" x="4" y="4" width="6" height="6"><g fill="#ebebeb"><rect x="5" y="0" width="1" height="1"/><rect x="4" y="1" width="1" height="1"/><rect x="3" y="2" width="1" height="1"/><rect x="2" y="3" width="1" height="1"/><rect x="1" y="4" width="1" height="1"/><rect x="0" y="5" width="1" height="1"/></g></pattern></defs><rect width="31" height="26" fill="url(#hp13)"/></svg><div style="position:absolute;left:2px;top:155px;width:29px;height:1px;background:#ABABAB"></div><div style="position:absolute;left:31px;top:130px;width:1px;height:26px;background:#ABABAB"></div><div class="t" style="left:7px;top:136px;font-size:13.6px;font-weight:bold;line-height:15px">-1</div><div style="position:absolute;left:32px;top:129px;width:1862px;height:1px;background:#D3D3D3"></div><div style="position:absolute;left:53px;top:155px;width:1841px;height:1px;background:#D3D3D3"></div><div class="t" style="left:35px;top:135px;font-size:13.35px;font-weight:bold;color:#0000FF;line-height:16px">Nhóm hàng hóa: đạm ure</div><svg style="position:absolute;left:0px;top:156px" width="31" height="26" shape-rendering="crispEdges"><defs><pattern id="hp14" patternUnits="userSpaceOnUse" x="4" y="2" width="6" height="6"><g fill="#ebebeb"><rect x="5" y="0" width="1" height="1"/><rect x="4" y="1" width="1" height="1"/><rect x="3" y="2" width="1" height="1"/><rect x="2" y="3" width="1" height="1"/><rect x="1" y="4" width="1" height="1"/><rect x="0" y="5" width="1" height="1"/></g></pattern></defs><rect width="31" height="26" fill="url(#hp14)"/></svg><div style="position:absolute;left:2px;top:181px;width:29px;height:1px;background:#ABABAB"></div><div style="position:absolute;left:31px;top:156px;width:1px;height:26px;background:#ABABAB"></div><div class="t" style="left:8px;top:162px;font-size:13.6px;font-weight:bold;line-height:15px">5</div><div style="position:absolute;left:53px;top:156px;width:180px;height:26px;background:linear-gradient(90deg,#F08080,#FFFFFF)"></div><div style="position:absolute;left:1368px;top:156px;width:384px;height:26px;background:#F0FFFF"></div><div style="position:absolute;left:53px;top:181px;width:1841px;height:1px;background:#D3D3D3"></div><div style="position:absolute;left:233px;top:156px;width:1px;height:26px;background:#D3D3D3"></div><div style="position:absolute;left:910px;top:156px;width:1px;height:26px;background:#D3D3D3"></div><div style="position:absolute;left:1067px;top:156px;width:1px;height:26px;background:#D3D3D3"></div><div style="position:absolute;left:1171px;top:156px;width:1px;height:26px;background:#D3D3D3"></div><div style="position:absolute;left:1367px;top:156px;width:1px;height:26px;background:#D3D3D3"></div><div style="position:absolute;left:1752px;top:156px;width:1px;height:26px;background:#D3D3D3"></div><div style="position:absolute;left:52px;top:156px;width:1px;height:26px;background:#E4ECEC"></div><div class="t" style="left:57px;top:161px;font-size:12.6px;line-height:16px;color:#000">dcm</div><div class="t" style="left:238px;top:161px;font-size:12.6px;line-height:16px;color:#000;transform:scaleX(1.0);transform-origin:0 0">Đạm Cà Mau</div><div class="t" style="left:915px;top:161px;font-size:12.6px;line-height:16px;color:#000">kg</div><div class="t" style="left:1068px;width:99px;text-align:right;top:161px;font-size:12.6px;line-height:16px;color:#000">10,000.</div><div class="t" style="left:1172px;width:191px;text-align:right;top:161px;font-size:12.6px;line-height:16px;color:#000">6,800</div><div class="t" style="left:1368px;width:381px;text-align:right;top:161px;font-size:12.6px;line-height:16px;color:#000">68,000,000</div><svg style="position:absolute;left:1817px;top:162px" width="14" height="14"><rect x="0.5" y="0.5" width="12" height="12" fill="#fff" stroke="#B0B0B0"/></svg><svg style="position:absolute;left:0px;top:182px" width="31" height="26" shape-rendering="crispEdges"><defs><pattern id="hp15" patternUnits="userSpaceOnUse" x="4" y="0" width="6" height="6"><g fill="#ebebeb"><rect x="5" y="0" width="1" height="1"/><rect x="4" y="1" width="1" height="1"/><rect x="3" y="2" width="1" height="1"/><rect x="2" y="3" width="1" height="1"/><rect x="1" y="4" width="1" height="1"/><rect x="0" y="5" width="1" height="1"/></g></pattern></defs><rect width="31" height="26" fill="url(#hp15)"/></svg><div style="position:absolute;left:2px;top:207px;width:29px;height:1px;background:#ABABAB"></div><div style="position:absolute;left:31px;top:182px;width:1px;height:26px;background:#ABABAB"></div><div class="t" style="left:8px;top:188px;font-size:13.6px;font-weight:bold;line-height:15px">6</div><div style="position:absolute;left:53px;top:182px;width:1314px;height:26px;background:linear-gradient(90deg,#FF0000 0px,#FFB400 1314px)"></div><div style="position:absolute;left:1368px;top:182px;width:384px;height:26px;background:#F0FFFF"></div><div style="position:absolute;left:1753px;top:182px;width:141px;height:26px;background:linear-gradient(90deg,#FFE800,#FFFF00 68%)"></div><div style="position:absolute;left:53px;top:207px;width:1841px;height:1px;background:#D3D3D3"></div><div style="position:absolute;left:233px;top:182px;width:1px;height:26px;background:#D3D3D3"></div><div style="position:absolute;left:910px;top:182px;width:1px;height:26px;background:#D3D3D3"></div><div style="position:absolute;left:1067px;top:182px;width:1px;height:26px;background:#D3D3D3"></div><div style="position:absolute;left:1171px;top:182px;width:1px;height:26px;background:#D3D3D3"></div><div style="position:absolute;left:1367px;top:182px;width:1px;height:26px;background:#D3D3D3"></div><div style="position:absolute;left:1752px;top:182px;width:1px;height:26px;background:#D3D3D3"></div><div style="position:absolute;left:52px;top:182px;width:1px;height:26px;background:#E4ECEC"></div><div class="t" style="left:57px;top:187px;font-size:12.6px;line-height:16px;color:#000">dhb</div><div class="t" style="left:238px;top:187px;font-size:12.6px;line-height:16px;color:#000;transform:scaleX(0.98);transform-origin:0 0">Đạm Hà Bắc</div><div class="t" style="left:915px;top:187px;font-size:12.6px;line-height:16px;color:#000">kg</div><div class="t" style="left:1068px;width:99px;text-align:right;top:187px;font-size:12.6px;line-height:16px;color:#000">100.</div><div class="t" style="left:1172px;width:191px;text-align:right;top:187px;font-size:12.6px;line-height:16px;color:#000">6,700</div><div class="t" style="left:1368px;width:381px;text-align:right;top:187px;font-size:12.6px;line-height:16px;color:#000">670,000</div><svg style="position:absolute;left:1817px;top:186px" width="16" height="17"><rect x="0.5" y="2.5" width="12" height="12" fill="#fff" stroke="#A8B0C4"/><path d="M2 8.5 L5.5 13.5 L12.5 1.5" fill="none" stroke="#000" stroke-width="1.8"/></svg><svg style="position:absolute;left:0px;top:208px" width="31" height="26" shape-rendering="crispEdges"><defs><pattern id="hp16" patternUnits="userSpaceOnUse" x="4" y="4" width="6" height="6"><g fill="#ebebeb"><rect x="5" y="0" width="1" height="1"/><rect x="4" y="1" width="1" height="1"/><rect x="3" y="2" width="1" height="1"/><rect x="2" y="3" width="1" height="1"/><rect x="1" y="4" width="1" height="1"/><rect x="0" y="5" width="1" height="1"/></g></pattern></defs><rect width="31" height="26" fill="url(#hp16)"/></svg><div style="position:absolute;left:2px;top:233px;width:29px;height:1px;background:#ABABAB"></div><div style="position:absolute;left:31px;top:208px;width:1px;height:26px;background:#ABABAB"></div><div class="t" style="left:8px;top:214px;font-size:13.6px;font-weight:bold;line-height:15px">7</div><div style="position:absolute;left:53px;top:208px;width:1314px;height:26px;background:linear-gradient(90deg,#FF0000 0px,#FFB400 1314px)"></div><div style="position:absolute;left:1368px;top:208px;width:384px;height:26px;background:#F0FFFF"></div><div style="position:absolute;left:1753px;top:208px;width:141px;height:26px;background:linear-gradient(90deg,#FFE800,#FFFF00 68%)"></div><div style="position:absolute;left:53px;top:233px;width:1841px;height:1px;background:#D3D3D3"></div><div style="position:absolute;left:233px;top:208px;width:1px;height:26px;background:#D3D3D3"></div><div style="position:absolute;left:910px;top:208px;width:1px;height:26px;background:#D3D3D3"></div><div style="position:absolute;left:1067px;top:208px;width:1px;height:26px;background:#D3D3D3"></div><div style="position:absolute;left:1171px;top:208px;width:1px;height:26px;background:#D3D3D3"></div><div style="position:absolute;left:1367px;top:208px;width:1px;height:26px;background:#D3D3D3"></div><div style="position:absolute;left:1752px;top:208px;width:1px;height:26px;background:#D3D3D3"></div><div style="position:absolute;left:52px;top:208px;width:1px;height:26px;background:#E4ECEC"></div><div class="t" style="left:57px;top:213px;font-size:12.6px;line-height:16px;color:#000">dnb</div><div class="t" style="left:238px;top:213px;font-size:12.6px;line-height:16px;color:#000;transform:scaleX(0.978);transform-origin:0 0">Đạm Ninh Bình</div><div class="t" style="left:915px;top:213px;font-size:12.6px;line-height:16px;color:#000">kg</div><div class="t" style="left:1068px;width:99px;text-align:right;top:213px;font-size:12.6px;line-height:16px;color:#000">100.</div><div class="t" style="left:1172px;width:191px;text-align:right;top:213px;font-size:12.6px;line-height:16px;color:#000">6,300</div><div class="t" style="left:1368px;width:381px;text-align:right;top:213px;font-size:12.6px;line-height:16px;color:#000">630,000</div><svg style="position:absolute;left:1817px;top:212px" width="16" height="17"><rect x="0.5" y="2.5" width="12" height="12" fill="#fff" stroke="#A8B0C4"/><path d="M2 8.5 L5.5 13.5 L12.5 1.5" fill="none" stroke="#000" stroke-width="1.8"/></svg><svg style="position:absolute;left:0px;top:234px" width="31" height="26" shape-rendering="crispEdges"><defs><pattern id="hp17" patternUnits="userSpaceOnUse" x="4" y="2" width="6" height="6"><g fill="#ebebeb"><rect x="5" y="0" width="1" height="1"/><rect x="4" y="1" width="1" height="1"/><rect x="3" y="2" width="1" height="1"/><rect x="2" y="3" width="1" height="1"/><rect x="1" y="4" width="1" height="1"/><rect x="0" y="5" width="1" height="1"/></g></pattern></defs><rect width="31" height="26" fill="url(#hp17)"/></svg><div style="position:absolute;left:2px;top:259px;width:29px;height:1px;background:#ABABAB"></div><div style="position:absolute;left:31px;top:234px;width:1px;height:26px;background:#ABABAB"></div><div class="t" style="left:8px;top:240px;font-size:13.6px;font-weight:bold;line-height:15px">8</div><div style="position:absolute;left:53px;top:234px;width:1314px;height:26px;background:linear-gradient(90deg,#FF0000 0px,#FFB400 1314px)"></div><div style="position:absolute;left:1368px;top:234px;width:384px;height:26px;background:#F0FFFF"></div><div style="position:absolute;left:1753px;top:234px;width:141px;height:26px;background:linear-gradient(90deg,#FFE800,#FFFF00 68%)"></div><div style="position:absolute;left:53px;top:259px;width:1841px;height:1px;background:#D3D3D3"></div><div style="position:absolute;left:233px;top:234px;width:1px;height:26px;background:#D3D3D3"></div><div style="position:absolute;left:910px;top:234px;width:1px;height:26px;background:#D3D3D3"></div><div style="position:absolute;left:1067px;top:234px;width:1px;height:26px;background:#D3D3D3"></div><div style="position:absolute;left:1171px;top:234px;width:1px;height:26px;background:#D3D3D3"></div><div style="position:absolute;left:1367px;top:234px;width:1px;height:26px;background:#D3D3D3"></div><div style="position:absolute;left:1752px;top:234px;width:1px;height:26px;background:#D3D3D3"></div><div style="position:absolute;left:52px;top:234px;width:1px;height:26px;background:#E4ECEC"></div><div class="t" style="left:57px;top:239px;font-size:12.6px;line-height:16px;color:#000">1234</div><div class="t" style="left:238px;top:239px;font-size:12.6px;line-height:16px;color:#000;transform:scaleX(0.926);transform-origin:0 0">URE CAMAU</div><div class="t" style="left:915px;top:239px;font-size:12.6px;line-height:16px;color:#000">bao</div><div class="t" style="left:1068px;width:99px;text-align:right;top:239px;font-size:12.6px;line-height:16px;color:#000">120.</div><div class="t" style="left:1172px;width:191px;text-align:right;top:239px;font-size:12.6px;line-height:16px;color:#000">365,000</div><div class="t" style="left:1368px;width:381px;text-align:right;top:239px;font-size:12.6px;line-height:16px;color:#000">43,800,000</div><svg style="position:absolute;left:1817px;top:238px" width="16" height="17"><rect x="0.5" y="2.5" width="12" height="12" fill="#fff" stroke="#A8B0C4"/><path d="M2 8.5 L5.5 13.5 L12.5 1.5" fill="none" stroke="#000" stroke-width="1.8"/></svg><svg style="position:absolute;left:0px;top:260px" width="31" height="26" shape-rendering="crispEdges"><defs><pattern id="hp18" patternUnits="userSpaceOnUse" x="4" y="0" width="6" height="6"><g fill="#ebebeb"><rect x="5" y="0" width="1" height="1"/><rect x="4" y="1" width="1" height="1"/><rect x="3" y="2" width="1" height="1"/><rect x="2" y="3" width="1" height="1"/><rect x="1" y="4" width="1" height="1"/><rect x="0" y="5" width="1" height="1"/></g></pattern></defs><rect width="31" height="26" fill="url(#hp18)"/></svg><div style="position:absolute;left:2px;top:285px;width:29px;height:1px;background:#ABABAB"></div><div style="position:absolute;left:31px;top:260px;width:1px;height:26px;background:#ABABAB"></div><div class="t" style="left:7px;top:266px;font-size:13.6px;font-weight:bold;line-height:15px">-2</div><div style="position:absolute;left:32px;top:259px;width:1862px;height:1px;background:#D3D3D3"></div><div style="position:absolute;left:53px;top:285px;width:1841px;height:1px;background:#D3D3D3"></div><div class="t" style="left:35px;top:265px;font-size:13.55px;font-weight:bold;color:#0000FF;line-height:16px">Nhóm hàng hóa: đầu trâu</div><svg style="position:absolute;left:0px;top:286px" width="31" height="26" shape-rendering="crispEdges"><defs><pattern id="hp19" patternUnits="userSpaceOnUse" x="4" y="4" width="6" height="6"><g fill="#ebebeb"><rect x="5" y="0" width="1" height="1"/><rect x="4" y="1" width="1" height="1"/><rect x="3" y="2" width="1" height="1"/><rect x="2" y="3" width="1" height="1"/><rect x="1" y="4" width="1" height="1"/><rect x="0" y="5" width="1" height="1"/></g></pattern></defs><rect width="31" height="26" fill="url(#hp19)"/></svg><div style="position:absolute;left:2px;top:311px;width:29px;height:1px;background:#ABABAB"></div><div style="position:absolute;left:31px;top:286px;width:1px;height:26px;background:#ABABAB"></div><div class="t" style="left:8px;top:292px;font-size:13.6px;font-weight:bold;line-height:15px">9</div><div style="position:absolute;left:53px;top:286px;width:1314px;height:26px;background:linear-gradient(90deg,#FF0000 0px,#FFB400 1314px)"></div><div style="position:absolute;left:1368px;top:286px;width:384px;height:26px;background:#F0FFFF"></div><div style="position:absolute;left:1753px;top:286px;width:141px;height:26px;background:linear-gradient(90deg,#FFE800,#FFFF00 68%)"></div><div style="position:absolute;left:53px;top:311px;width:1841px;height:1px;background:#D3D3D3"></div><div style="position:absolute;left:233px;top:286px;width:1px;height:26px;background:#D3D3D3"></div><div style="position:absolute;left:910px;top:286px;width:1px;height:26px;background:#D3D3D3"></div><div style="position:absolute;left:1067px;top:286px;width:1px;height:26px;background:#D3D3D3"></div><div style="position:absolute;left:1171px;top:286px;width:1px;height:26px;background:#D3D3D3"></div><div style="position:absolute;left:1367px;top:286px;width:1px;height:26px;background:#D3D3D3"></div><div style="position:absolute;left:1752px;top:286px;width:1px;height:26px;background:#D3D3D3"></div><div style="position:absolute;left:52px;top:286px;width:1px;height:26px;background:#E4ECEC"></div><div class="t" style="left:57px;top:291px;font-size:12.6px;line-height:16px;color:#000">963</div><div class="t" style="left:238px;top:291px;font-size:12.6px;line-height:16px;color:#000;transform:scaleX(1.058);transform-origin:0 0">9.6.3 đầu trâu</div><div class="t" style="left:915px;top:291px;font-size:12.6px;line-height:16px;color:#000">kg</div><div class="t" style="left:1068px;width:99px;text-align:right;top:291px;font-size:12.6px;line-height:16px;color:#000">120.</div><div class="t" style="left:1172px;width:191px;text-align:right;top:291px;font-size:12.6px;line-height:16px;color:#000">8,000</div><div class="t" style="left:1368px;width:381px;text-align:right;top:291px;font-size:12.6px;line-height:16px;color:#000">960,000</div><svg style="position:absolute;left:1817px;top:290px" width="16" height="17"><rect x="0.5" y="2.5" width="12" height="12" fill="#fff" stroke="#A8B0C4"/><path d="M2 8.5 L5.5 13.5 L12.5 1.5" fill="none" stroke="#000" stroke-width="1.8"/></svg><svg style="position:absolute;left:0px;top:312px" width="31" height="26" shape-rendering="crispEdges"><defs><pattern id="hp20" patternUnits="userSpaceOnUse" x="4" y="2" width="6" height="6"><g fill="#ebebeb"><rect x="5" y="0" width="1" height="1"/><rect x="4" y="1" width="1" height="1"/><rect x="3" y="2" width="1" height="1"/><rect x="2" y="3" width="1" height="1"/><rect x="1" y="4" width="1" height="1"/><rect x="0" y="5" width="1" height="1"/></g></pattern></defs><rect width="31" height="26" fill="url(#hp20)"/></svg><div style="position:absolute;left:2px;top:337px;width:29px;height:1px;background:#ABABAB"></div><div style="position:absolute;left:31px;top:312px;width:1px;height:26px;background:#ABABAB"></div><div class="t" style="left:8px;top:318px;font-size:13.6px;font-weight:bold;line-height:15px">10</div><div style="position:absolute;left:53px;top:312px;width:1314px;height:26px;background:linear-gradient(90deg,#FF0000 0px,#FFB400 1314px)"></div><div style="position:absolute;left:1368px;top:312px;width:384px;height:26px;background:#F0FFFF"></div><div style="position:absolute;left:1753px;top:312px;width:141px;height:26px;background:linear-gradient(90deg,#FFE800,#FFFF00 68%)"></div><div style="position:absolute;left:53px;top:337px;width:1841px;height:1px;background:#D3D3D3"></div><div style="position:absolute;left:233px;top:312px;width:1px;height:26px;background:#D3D3D3"></div><div style="position:absolute;left:910px;top:312px;width:1px;height:26px;background:#D3D3D3"></div><div style="position:absolute;left:1067px;top:312px;width:1px;height:26px;background:#D3D3D3"></div><div style="position:absolute;left:1171px;top:312px;width:1px;height:26px;background:#D3D3D3"></div><div style="position:absolute;left:1367px;top:312px;width:1px;height:26px;background:#D3D3D3"></div><div style="position:absolute;left:1752px;top:312px;width:1px;height:26px;background:#D3D3D3"></div><div style="position:absolute;left:52px;top:312px;width:1px;height:26px;background:#E4ECEC"></div><div class="t" style="left:57px;top:317px;font-size:12.6px;line-height:16px;color:#000">damn</div><div class="t" style="left:238px;top:317px;font-size:12.6px;line-height:16px;color:#000;transform:scaleX(1.008);transform-origin:0 0">Đạm AMINO - Hạt xanh loại 25kg</div><div class="t" style="left:915px;top:317px;font-size:12.6px;line-height:16px;color:#000">kg</div><div class="t" style="left:1068px;width:99px;text-align:right;top:317px;font-size:12.6px;line-height:16px;color:#000">21.</div><div class="t" style="left:1172px;width:191px;text-align:right;top:317px;font-size:12.6px;line-height:16px;color:#000">8,870</div><div class="t" style="left:1368px;width:381px;text-align:right;top:317px;font-size:12.6px;line-height:16px;color:#000">186,270</div><svg style="position:absolute;left:1817px;top:316px" width="16" height="17"><rect x="0.5" y="2.5" width="12" height="12" fill="#fff" stroke="#A8B0C4"/><path d="M2 8.5 L5.5 13.5 L12.5 1.5" fill="none" stroke="#000" stroke-width="1.8"/></svg><svg style="position:absolute;left:0px;top:338px" width="31" height="26" shape-rendering="crispEdges"><defs><pattern id="hp21" patternUnits="userSpaceOnUse" x="4" y="0" width="6" height="6"><g fill="#ebebeb"><rect x="5" y="0" width="1" height="1"/><rect x="4" y="1" width="1" height="1"/><rect x="3" y="2" width="1" height="1"/><rect x="2" y="3" width="1" height="1"/><rect x="1" y="4" width="1" height="1"/><rect x="0" y="5" width="1" height="1"/></g></pattern></defs><rect width="31" height="26" fill="url(#hp21)"/></svg><div style="position:absolute;left:2px;top:363px;width:29px;height:1px;background:#ABABAB"></div><div style="position:absolute;left:31px;top:338px;width:1px;height:26px;background:#ABABAB"></div><div class="t" style="left:8px;top:344px;font-size:13.6px;font-weight:bold;line-height:15px">11</div><div style="position:absolute;left:53px;top:338px;width:1314px;height:26px;background:linear-gradient(90deg,#FF0000 0px,#FFB400 1314px)"></div><div style="position:absolute;left:1368px;top:338px;width:384px;height:26px;background:#F0FFFF"></div><div style="position:absolute;left:1753px;top:338px;width:141px;height:26px;background:linear-gradient(90deg,#FFE800,#FFFF00 68%)"></div><div style="position:absolute;left:53px;top:363px;width:1841px;height:1px;background:#D3D3D3"></div><div style="position:absolute;left:233px;top:338px;width:1px;height:26px;background:#D3D3D3"></div><div style="position:absolute;left:910px;top:338px;width:1px;height:26px;background:#D3D3D3"></div><div style="position:absolute;left:1067px;top:338px;width:1px;height:26px;background:#D3D3D3"></div><div style="position:absolute;left:1171px;top:338px;width:1px;height:26px;background:#D3D3D3"></div><div style="position:absolute;left:1367px;top:338px;width:1px;height:26px;background:#D3D3D3"></div><div style="position:absolute;left:1752px;top:338px;width:1px;height:26px;background:#D3D3D3"></div><div style="position:absolute;left:52px;top:338px;width:1px;height:26px;background:#E4ECEC"></div><div class="t" style="left:57px;top:343px;font-size:12.6px;line-height:16px;color:#000">đtcc</div><div class="t" style="left:238px;top:343px;font-size:12.6px;line-height:16px;color:#000;transform:scaleX(1.028);transform-origin:0 0">Đạm đầu trâu cao cấp (Hạt nhỏ mầu xanh)</div><div class="t" style="left:915px;top:343px;font-size:12.6px;line-height:16px;color:#000">kg</div><div class="t" style="left:1068px;width:99px;text-align:right;top:343px;font-size:12.6px;line-height:16px;color:#000">12.</div><div class="t" style="left:1172px;width:191px;text-align:right;top:343px;font-size:12.6px;line-height:16px;color:#000">7,870</div><div class="t" style="left:1368px;width:381px;text-align:right;top:343px;font-size:12.6px;line-height:16px;color:#000">94,440</div><svg style="position:absolute;left:1817px;top:342px" width="16" height="17"><rect x="0.5" y="2.5" width="12" height="12" fill="#fff" stroke="#A8B0C4"/><path d="M2 8.5 L5.5 13.5 L12.5 1.5" fill="none" stroke="#000" stroke-width="1.8"/></svg><svg style="position:absolute;left:0px;top:364px" width="31" height="26" shape-rendering="crispEdges"><defs><pattern id="hp22" patternUnits="userSpaceOnUse" x="4" y="4" width="6" height="6"><g fill="#ebebeb"><rect x="5" y="0" width="1" height="1"/><rect x="4" y="1" width="1" height="1"/><rect x="3" y="2" width="1" height="1"/><rect x="2" y="3" width="1" height="1"/><rect x="1" y="4" width="1" height="1"/><rect x="0" y="5" width="1" height="1"/></g></pattern></defs><rect width="31" height="26" fill="url(#hp22)"/></svg><div style="position:absolute;left:2px;top:389px;width:29px;height:1px;background:#ABABAB"></div><div style="position:absolute;left:31px;top:364px;width:1px;height:26px;background:#ABABAB"></div><div class="t" style="left:8px;top:370px;font-size:13.6px;font-weight:bold;line-height:15px">12</div><div style="position:absolute;left:53px;top:364px;width:1314px;height:26px;background:linear-gradient(90deg,#FF0000 0px,#FFB400 1314px)"></div><div style="position:absolute;left:1368px;top:364px;width:384px;height:26px;background:#F0FFFF"></div><div style="position:absolute;left:1753px;top:364px;width:141px;height:26px;background:linear-gradient(90deg,#FFE800,#FFFF00 68%)"></div><div style="position:absolute;left:53px;top:389px;width:1841px;height:1px;background:#D3D3D3"></div><div style="position:absolute;left:233px;top:364px;width:1px;height:26px;background:#D3D3D3"></div><div style="position:absolute;left:910px;top:364px;width:1px;height:26px;background:#D3D3D3"></div><div style="position:absolute;left:1067px;top:364px;width:1px;height:26px;background:#D3D3D3"></div><div style="position:absolute;left:1171px;top:364px;width:1px;height:26px;background:#D3D3D3"></div><div style="position:absolute;left:1367px;top:364px;width:1px;height:26px;background:#D3D3D3"></div><div style="position:absolute;left:1752px;top:364px;width:1px;height:26px;background:#D3D3D3"></div><div style="position:absolute;left:52px;top:364px;width:1px;height:26px;background:#E4ECEC"></div><div class="t" style="left:57px;top:369px;font-size:12.6px;line-height:16px;color:#000">dv</div><div class="t" style="left:238px;top:369px;font-size:12.6px;line-height:16px;color:#000;transform:scaleX(1.027);transform-origin:0 0">Đạm đầu Trâu hạt vàng 46A+</div><div class="t" style="left:915px;top:369px;font-size:12.6px;line-height:16px;color:#000">kg</div><div class="t" style="left:1068px;width:99px;text-align:right;top:369px;font-size:12.6px;line-height:16px;color:#000">120.</div><div class="t" style="left:1172px;width:191px;text-align:right;top:369px;font-size:12.6px;line-height:16px;color:#000">8,680</div><div class="t" style="left:1368px;width:381px;text-align:right;top:369px;font-size:12.6px;line-height:16px;color:#000">1,041,600</div><svg style="position:absolute;left:1817px;top:368px" width="16" height="17"><rect x="0.5" y="2.5" width="12" height="12" fill="#fff" stroke="#A8B0C4"/><path d="M2 8.5 L5.5 13.5 L12.5 1.5" fill="none" stroke="#000" stroke-width="1.8"/></svg><svg style="position:absolute;left:0px;top:390px" width="31" height="26" shape-rendering="crispEdges"><defs><pattern id="hp23" patternUnits="userSpaceOnUse" x="4" y="2" width="6" height="6"><g fill="#ebebeb"><rect x="5" y="0" width="1" height="1"/><rect x="4" y="1" width="1" height="1"/><rect x="3" y="2" width="1" height="1"/><rect x="2" y="3" width="1" height="1"/><rect x="1" y="4" width="1" height="1"/><rect x="0" y="5" width="1" height="1"/></g></pattern></defs><rect width="31" height="26" fill="url(#hp23)"/></svg><div style="position:absolute;left:2px;top:415px;width:29px;height:1px;background:#ABABAB"></div><div style="position:absolute;left:31px;top:390px;width:1px;height:26px;background:#ABABAB"></div><div class="t" style="left:8px;top:396px;font-size:13.6px;font-weight:bold;line-height:15px">13</div><div style="position:absolute;left:53px;top:390px;width:1314px;height:26px;background:linear-gradient(90deg,#FF0000 0px,#FFB400 1314px)"></div><div style="position:absolute;left:1368px;top:390px;width:384px;height:26px;background:#F0FFFF"></div><div style="position:absolute;left:1753px;top:390px;width:141px;height:26px;background:linear-gradient(90deg,#FFE800,#FFFF00 68%)"></div><div style="position:absolute;left:53px;top:415px;width:1841px;height:1px;background:#D3D3D3"></div><div style="position:absolute;left:233px;top:390px;width:1px;height:26px;background:#D3D3D3"></div><div style="position:absolute;left:910px;top:390px;width:1px;height:26px;background:#D3D3D3"></div><div style="position:absolute;left:1067px;top:390px;width:1px;height:26px;background:#D3D3D3"></div><div style="position:absolute;left:1171px;top:390px;width:1px;height:26px;background:#D3D3D3"></div><div style="position:absolute;left:1367px;top:390px;width:1px;height:26px;background:#D3D3D3"></div><div style="position:absolute;left:1752px;top:390px;width:1px;height:26px;background:#D3D3D3"></div><div style="position:absolute;left:52px;top:390px;width:1px;height:26px;background:#E4ECEC"></div><div class="t" style="left:57px;top:395px;font-size:12.6px;line-height:16px;color:#000">dt1055-50kg</div><div class="t" style="left:238px;top:395px;font-size:12.6px;line-height:16px;color:#000;transform:scaleX(1.01);transform-origin:0 0">Đầu Trâu 1055 ( Bao 50KG)</div><div class="t" style="left:915px;top:395px;font-size:12.6px;line-height:16px;color:#000">kg</div><div class="t" style="left:1068px;width:99px;text-align:right;top:395px;font-size:12.6px;line-height:16px;color:#000">1,220.</div><div class="t" style="left:1172px;width:191px;text-align:right;top:395px;font-size:12.6px;line-height:16px;color:#000">0</div><div class="t" style="left:1368px;width:381px;text-align:right;top:395px;font-size:12.6px;line-height:16px;color:#000">0</div><svg style="position:absolute;left:1817px;top:394px" width="16" height="17"><rect x="0.5" y="2.5" width="12" height="12" fill="#fff" stroke="#A8B0C4"/><path d="M2 8.5 L5.5 13.5 L12.5 1.5" fill="none" stroke="#000" stroke-width="1.8"/></svg><svg style="position:absolute;left:0px;top:416px" width="31" height="26" shape-rendering="crispEdges"><defs><pattern id="hp24" patternUnits="userSpaceOnUse" x="4" y="0" width="6" height="6"><g fill="#ebebeb"><rect x="5" y="0" width="1" height="1"/><rect x="4" y="1" width="1" height="1"/><rect x="3" y="2" width="1" height="1"/><rect x="2" y="3" width="1" height="1"/><rect x="1" y="4" width="1" height="1"/><rect x="0" y="5" width="1" height="1"/></g></pattern></defs><rect width="31" height="26" fill="url(#hp24)"/></svg><div style="position:absolute;left:2px;top:441px;width:29px;height:1px;background:#ABABAB"></div><div style="position:absolute;left:31px;top:416px;width:1px;height:26px;background:#ABABAB"></div><div class="t" style="left:8px;top:422px;font-size:13.6px;font-weight:bold;line-height:15px">14</div><div style="position:absolute;left:53px;top:416px;width:180px;height:26px;background:linear-gradient(90deg,#F08080,#FFFFFF)"></div><div style="position:absolute;left:1368px;top:416px;width:384px;height:26px;background:#F0FFFF"></div><div style="position:absolute;left:53px;top:441px;width:1841px;height:1px;background:#D3D3D3"></div><div style="position:absolute;left:233px;top:416px;width:1px;height:26px;background:#D3D3D3"></div><div style="position:absolute;left:910px;top:416px;width:1px;height:26px;background:#D3D3D3"></div><div style="position:absolute;left:1067px;top:416px;width:1px;height:26px;background:#D3D3D3"></div><div style="position:absolute;left:1171px;top:416px;width:1px;height:26px;background:#D3D3D3"></div><div style="position:absolute;left:1367px;top:416px;width:1px;height:26px;background:#D3D3D3"></div><div style="position:absolute;left:1752px;top:416px;width:1px;height:26px;background:#D3D3D3"></div><div style="position:absolute;left:52px;top:416px;width:1px;height:26px;background:#E4ECEC"></div><div class="t" style="left:57px;top:421px;font-size:12.6px;line-height:16px;color:#000">dt13</div><div class="t" style="left:238px;top:421px;font-size:12.6px;line-height:16px;color:#000;transform:scaleX(1.015);transform-origin:0 0">Đầu trâu 13te (LOẠI 50KG)</div><div class="t" style="left:915px;top:421px;font-size:12.6px;line-height:16px;color:#000">kg</div><div class="t" style="left:1068px;width:99px;text-align:right;top:421px;font-size:12.6px;line-height:16px;color:#000">1,000.</div><div class="t" style="left:1172px;width:191px;text-align:right;top:421px;font-size:12.6px;line-height:16px;color:#000">12,040</div><div class="t" style="left:1368px;width:381px;text-align:right;top:421px;font-size:12.6px;line-height:16px;color:#000">12,040,000</div><svg style="position:absolute;left:1817px;top:422px" width="14" height="14"><rect x="0.5" y="0.5" width="12" height="12" fill="#fff" stroke="#B0B0B0"/></svg><svg style="position:absolute;left:0px;top:442px" width="31" height="26" shape-rendering="crispEdges"><defs><pattern id="hp25" patternUnits="userSpaceOnUse" x="4" y="4" width="6" height="6"><g fill="#ebebeb"><rect x="5" y="0" width="1" height="1"/><rect x="4" y="1" width="1" height="1"/><rect x="3" y="2" width="1" height="1"/><rect x="2" y="3" width="1" height="1"/><rect x="1" y="4" width="1" height="1"/><rect x="0" y="5" width="1" height="1"/></g></pattern></defs><rect width="31" height="26" fill="url(#hp25)"/></svg><div style="position:absolute;left:2px;top:467px;width:29px;height:1px;background:#ABABAB"></div><div style="position:absolute;left:31px;top:442px;width:1px;height:26px;background:#ABABAB"></div><div class="t" style="left:8px;top:448px;font-size:13.6px;font-weight:bold;line-height:15px">15</div><div style="position:absolute;left:53px;top:442px;width:180px;height:26px;background:linear-gradient(90deg,#F08080,#FFFFFF)"></div><div style="position:absolute;left:1368px;top:442px;width:384px;height:26px;background:#F0FFFF"></div><div style="position:absolute;left:53px;top:467px;width:1841px;height:1px;background:#D3D3D3"></div><div style="position:absolute;left:233px;top:442px;width:1px;height:26px;background:#D3D3D3"></div><div style="position:absolute;left:910px;top:442px;width:1px;height:26px;background:#D3D3D3"></div><div style="position:absolute;left:1067px;top:442px;width:1px;height:26px;background:#D3D3D3"></div><div style="position:absolute;left:1171px;top:442px;width:1px;height:26px;background:#D3D3D3"></div><div style="position:absolute;left:1367px;top:442px;width:1px;height:26px;background:#D3D3D3"></div><div style="position:absolute;left:1752px;top:442px;width:1px;height:26px;background:#D3D3D3"></div><div style="position:absolute;left:52px;top:442px;width:1px;height:26px;background:#E4ECEC"></div><div class="t" style="left:57px;top:447px;font-size:12.6px;line-height:16px;color:#000">dt13l25</div><div class="t" style="left:238px;top:447px;font-size:12.6px;line-height:16px;color:#000;transform:scaleX(1.03);transform-origin:0 0">Đầu trâu 13te loại 25kg</div><div class="t" style="left:915px;top:447px;font-size:12.6px;line-height:16px;color:#000">kg</div><div class="t" style="left:1068px;width:99px;text-align:right;top:447px;font-size:12.6px;line-height:16px;color:#000">1,000.</div><div class="t" style="left:1172px;width:191px;text-align:right;top:447px;font-size:12.6px;line-height:16px;color:#000">12,200</div><div class="t" style="left:1368px;width:381px;text-align:right;top:447px;font-size:12.6px;line-height:16px;color:#000">12,200,000</div><svg style="position:absolute;left:1817px;top:448px" width="14" height="14"><rect x="0.5" y="0.5" width="12" height="12" fill="#fff" stroke="#B0B0B0"/></svg><svg style="position:absolute;left:0px;top:468px" width="31" height="26" shape-rendering="crispEdges"><defs><pattern id="hp26" patternUnits="userSpaceOnUse" x="4" y="2" width="6" height="6"><g fill="#ebebeb"><rect x="5" y="0" width="1" height="1"/><rect x="4" y="1" width="1" height="1"/><rect x="3" y="2" width="1" height="1"/><rect x="2" y="3" width="1" height="1"/><rect x="1" y="4" width="1" height="1"/><rect x="0" y="5" width="1" height="1"/></g></pattern></defs><rect width="31" height="26" fill="url(#hp26)"/></svg><div style="position:absolute;left:2px;top:493px;width:29px;height:1px;background:#ABABAB"></div><div style="position:absolute;left:31px;top:468px;width:1px;height:26px;background:#ABABAB"></div><div class="t" style="left:8px;top:474px;font-size:13.6px;font-weight:bold;line-height:15px">16</div><div style="position:absolute;left:53px;top:468px;width:1314px;height:26px;background:linear-gradient(90deg,#FF0000 0px,#FFB400 1314px)"></div><div style="position:absolute;left:1368px;top:468px;width:384px;height:26px;background:#F0FFFF"></div><div style="position:absolute;left:1753px;top:468px;width:141px;height:26px;background:linear-gradient(90deg,#FFE800,#FFFF00 68%)"></div><div style="position:absolute;left:53px;top:493px;width:1841px;height:1px;background:#D3D3D3"></div><div style="position:absolute;left:233px;top:468px;width:1px;height:26px;background:#D3D3D3"></div><div style="position:absolute;left:910px;top:468px;width:1px;height:26px;background:#D3D3D3"></div><div style="position:absolute;left:1067px;top:468px;width:1px;height:26px;background:#D3D3D3"></div><div style="position:absolute;left:1171px;top:468px;width:1px;height:26px;background:#D3D3D3"></div><div style="position:absolute;left:1367px;top:468px;width:1px;height:26px;background:#D3D3D3"></div><div style="position:absolute;left:1752px;top:468px;width:1px;height:26px;background:#D3D3D3"></div><div style="position:absolute;left:52px;top:468px;width:1px;height:26px;background:#E4ECEC"></div><div class="t" style="left:57px;top:473px;font-size:12.6px;line-height:16px;color:#000">amn01</div><div class="t" style="left:238px;top:473px;font-size:12.6px;line-height:16px;color:#000;transform:scaleX(1.003);transform-origin:0 0">Đầu trâu Amino 01 - NPK Bón Lót</div><div class="t" style="left:915px;top:473px;font-size:12.6px;line-height:16px;color:#000">kg</div><div class="t" style="left:1068px;width:99px;text-align:right;top:473px;font-size:12.6px;line-height:16px;color:#000">120.</div><div class="t" style="left:1172px;width:191px;text-align:right;top:473px;font-size:12.6px;line-height:16px;color:#000">7,000</div><div class="t" style="left:1368px;width:381px;text-align:right;top:473px;font-size:12.6px;line-height:16px;color:#000">840,000</div><svg style="position:absolute;left:1817px;top:472px" width="16" height="17"><rect x="0.5" y="2.5" width="12" height="12" fill="#fff" stroke="#A8B0C4"/><path d="M2 8.5 L5.5 13.5 L12.5 1.5" fill="none" stroke="#000" stroke-width="1.8"/></svg><svg style="position:absolute;left:0px;top:494px" width="31" height="26" shape-rendering="crispEdges"><defs><pattern id="hp27" patternUnits="userSpaceOnUse" x="4" y="0" width="6" height="6"><g fill="#ebebeb"><rect x="5" y="0" width="1" height="1"/><rect x="4" y="1" width="1" height="1"/><rect x="3" y="2" width="1" height="1"/><rect x="2" y="3" width="1" height="1"/><rect x="1" y="4" width="1" height="1"/><rect x="0" y="5" width="1" height="1"/></g></pattern></defs><rect width="31" height="26" fill="url(#hp27)"/></svg><div style="position:absolute;left:2px;top:519px;width:29px;height:1px;background:#ABABAB"></div><div style="position:absolute;left:31px;top:494px;width:1px;height:26px;background:#ABABAB"></div><div class="t" style="left:8px;top:500px;font-size:13.6px;font-weight:bold;line-height:15px">17</div><div style="position:absolute;left:53px;top:494px;width:1314px;height:26px;background:linear-gradient(90deg,#FF0000 0px,#FFB400 1314px)"></div><div style="position:absolute;left:1368px;top:494px;width:384px;height:26px;background:#F0FFFF"></div><div style="position:absolute;left:1753px;top:494px;width:141px;height:26px;background:linear-gradient(90deg,#FFE800,#FFFF00 68%)"></div><div style="position:absolute;left:53px;top:519px;width:1841px;height:1px;background:#D3D3D3"></div><div style="position:absolute;left:233px;top:494px;width:1px;height:26px;background:#D3D3D3"></div><div style="position:absolute;left:910px;top:494px;width:1px;height:26px;background:#D3D3D3"></div><div style="position:absolute;left:1067px;top:494px;width:1px;height:26px;background:#D3D3D3"></div><div style="position:absolute;left:1171px;top:494px;width:1px;height:26px;background:#D3D3D3"></div><div style="position:absolute;left:1367px;top:494px;width:1px;height:26px;background:#D3D3D3"></div><div style="position:absolute;left:1752px;top:494px;width:1px;height:26px;background:#D3D3D3"></div><div style="position:absolute;left:52px;top:494px;width:1px;height:26px;background:#E4ECEC"></div><div class="t" style="left:57px;top:499px;font-size:12.6px;line-height:16px;color:#000">amn02</div><div class="t" style="left:238px;top:499px;font-size:12.6px;line-height:16px;color:#000;transform:scaleX(1.021);transform-origin:0 0">Đầu Trâu Amino 02 NPK (25-20-10)</div><div class="t" style="left:915px;top:499px;font-size:12.6px;line-height:16px;color:#000">kg</div><div class="t" style="left:1068px;width:99px;text-align:right;top:499px;font-size:12.6px;line-height:16px;color:#000">155.</div><div class="t" style="left:1172px;width:191px;text-align:right;top:499px;font-size:12.6px;line-height:16px;color:#000">13,700</div><div class="t" style="left:1368px;width:381px;text-align:right;top:499px;font-size:12.6px;line-height:16px;color:#000">2,123,500</div><svg style="position:absolute;left:1817px;top:498px" width="16" height="17"><rect x="0.5" y="2.5" width="12" height="12" fill="#fff" stroke="#A8B0C4"/><path d="M2 8.5 L5.5 13.5 L12.5 1.5" fill="none" stroke="#000" stroke-width="1.8"/></svg><svg style="position:absolute;left:0px;top:520px" width="31" height="26" shape-rendering="crispEdges"><defs><pattern id="hp28" patternUnits="userSpaceOnUse" x="4" y="4" width="6" height="6"><g fill="#ebebeb"><rect x="5" y="0" width="1" height="1"/><rect x="4" y="1" width="1" height="1"/><rect x="3" y="2" width="1" height="1"/><rect x="2" y="3" width="1" height="1"/><rect x="1" y="4" width="1" height="1"/><rect x="0" y="5" width="1" height="1"/></g></pattern></defs><rect width="31" height="26" fill="url(#hp28)"/></svg><div style="position:absolute;left:2px;top:545px;width:29px;height:1px;background:#ABABAB"></div><div style="position:absolute;left:31px;top:520px;width:1px;height:26px;background:#ABABAB"></div><div class="t" style="left:8px;top:526px;font-size:13.6px;font-weight:bold;line-height:15px">18</div><div style="position:absolute;left:53px;top:520px;width:1314px;height:26px;background:linear-gradient(90deg,#FF0000 0px,#FFB400 1314px)"></div><div style="position:absolute;left:1368px;top:520px;width:384px;height:26px;background:#F0FFFF"></div><div style="position:absolute;left:1753px;top:520px;width:141px;height:26px;background:linear-gradient(90deg,#FFE800,#FFFF00 68%)"></div><div style="position:absolute;left:53px;top:545px;width:1841px;height:1px;background:#D3D3D3"></div><div style="position:absolute;left:233px;top:520px;width:1px;height:26px;background:#D3D3D3"></div><div style="position:absolute;left:910px;top:520px;width:1px;height:26px;background:#D3D3D3"></div><div style="position:absolute;left:1067px;top:520px;width:1px;height:26px;background:#D3D3D3"></div><div style="position:absolute;left:1171px;top:520px;width:1px;height:26px;background:#D3D3D3"></div><div style="position:absolute;left:1367px;top:520px;width:1px;height:26px;background:#D3D3D3"></div><div style="position:absolute;left:1752px;top:520px;width:1px;height:26px;background:#D3D3D3"></div><div style="position:absolute;left:52px;top:520px;width:1px;height:26px;background:#E4ECEC"></div><div class="t" style="left:57px;top:525px;font-size:12.6px;line-height:16px;color:#000">amn03</div><div class="t" style="left:238px;top:525px;font-size:12.6px;line-height:16px;color:#000;transform:scaleX(1.026);transform-origin:0 0">Đầu Trâu Amino03 NPK (15-5-25)</div><div class="t" style="left:915px;top:525px;font-size:12.6px;line-height:16px;color:#000">kg</div><div class="t" style="left:1068px;width:99px;text-align:right;top:525px;font-size:12.6px;line-height:16px;color:#000">120.</div><div class="t" style="left:1172px;width:191px;text-align:right;top:525px;font-size:12.6px;line-height:16px;color:#000">12,700</div><div class="t" style="left:1368px;width:381px;text-align:right;top:525px;font-size:12.6px;line-height:16px;color:#000">1,524,000</div><svg style="position:absolute;left:1817px;top:524px" width="16" height="17"><rect x="0.5" y="2.5" width="12" height="12" fill="#fff" stroke="#A8B0C4"/><path d="M2 8.5 L5.5 13.5 L12.5 1.5" fill="none" stroke="#000" stroke-width="1.8"/></svg><svg style="position:absolute;left:0px;top:546px" width="31" height="26" shape-rendering="crispEdges"><defs><pattern id="hp29" patternUnits="userSpaceOnUse" x="4" y="2" width="6" height="6"><g fill="#ebebeb"><rect x="5" y="0" width="1" height="1"/><rect x="4" y="1" width="1" height="1"/><rect x="3" y="2" width="1" height="1"/><rect x="2" y="3" width="1" height="1"/><rect x="1" y="4" width="1" height="1"/><rect x="0" y="5" width="1" height="1"/></g></pattern></defs><rect width="31" height="26" fill="url(#hp29)"/></svg><div style="position:absolute;left:2px;top:571px;width:29px;height:1px;background:#ABABAB"></div><div style="position:absolute;left:31px;top:546px;width:1px;height:26px;background:#ABABAB"></div><svg style="position:absolute;left:3px;top:551px" width="14" height="16"><path d="M5.3 13.2 L5 9.6 L9.2 3.1 Q10.1 1.9 11.3 2.5 Q12.3 3.2 11.6 4.6 L7.3 11.4 Z" fill="none" stroke="#000" stroke-width="1.1"/><rect x="8" y="12.5" width="1" height="1" fill="#000"/><rect x="10.5" y="12.5" width="1" height="1" fill="#000"/></svg><div class="t" style="left:16px;top:552px;font-size:13px;font-weight:bold;line-height:15px;width:8px;overflow:hidden">1</div><div style="position:absolute;left:24px;top:556px;width:1px;height:3px;background:#c07020"></div><div style="position:absolute;left:53px;top:546px;width:1841px;height:26px;background:#00FF7F"></div><div style="position:absolute;left:53px;top:571px;width:1841px;height:1px;background:#D3D3D3"></div><div style="position:absolute;left:233px;top:546px;width:1px;height:26px;background:#D3D3D3"></div><div style="position:absolute;left:910px;top:546px;width:1px;height:26px;background:#D3D3D3"></div><div style="position:absolute;left:1067px;top:546px;width:1px;height:26px;background:#D3D3D3"></div><div style="position:absolute;left:1171px;top:546px;width:1px;height:26px;background:#D3D3D3"></div><div style="position:absolute;left:1367px;top:546px;width:1px;height:26px;background:#D3D3D3"></div><div style="position:absolute;left:1752px;top:546px;width:1px;height:26px;background:#D3D3D3"></div><div style="position:absolute;left:52px;top:546px;width:1px;height:26px;background:#E4ECEC"></div><div class="t" style="left:57px;top:551px;font-size:13.2px;line-height:16px;font-weight:bold;color:#0000FF">dtt</div><div class="t" style="left:238px;top:551px;font-size:13.2px;line-height:16px;font-weight:bold;color:#0000FF;transform:scaleX(1.043);transform-origin:0 0">Đầu Trâu bón thúc</div><div class="t" style="left:915px;top:551px;font-size:13.2px;line-height:16px;font-weight:bold;color:#0000FF">kg</div><div class="t" style="left:1068px;width:99px;text-align:right;top:551px;font-size:14px;line-height:16px;font-weight:bold;color:#0000FF">120.</div><div style="position:absolute;left:1172px;top:546px;width:195px;height:26px;background:#FFFF00;border:1px dotted #E00000"></div><div style="position:absolute;left:1173px;top:547px;width:177px;height:3px;background:#FFFF90"></div><div style="position:absolute;left:1173px;top:567px;width:177px;height:4px;background:#FFFF90"></div><div style="position:absolute;left:1348px;top:547px;width:3px;height:24px;background:#FFFF90"></div><div style="position:absolute;left:1304px;top:550px;width:44px;height:17px;background:#0078D7"></div><div class="t" style="left:1298px;width:51px;text-align:right;top:551px;font-size:13.6px;line-height:16px;font-weight:bold;color:#fff">10,050</div><svg style="position:absolute;left:1353px;top:557px" width="10" height="6"><path d="M1 1 L8 1 L4.5 5 Z" fill="#000"/></svg><div class="t" style="left:1368px;width:381px;text-align:right;top:551px;font-size:14px;line-height:16px;font-weight:bold;color:#0000FF">1,206,000</div><svg style="position:absolute;left:1817px;top:550px" width="16" height="17"><rect x="0.5" y="2.5" width="12" height="12" fill="#fff" stroke="#A8B0C4"/><path d="M2 8.5 L5.5 13.5 L12.5 1.5" fill="none" stroke="#000" stroke-width="1.8"/></svg><svg style="position:absolute;left:0px;top:572px" width="31" height="26" shape-rendering="crispEdges"><defs><pattern id="hp30" patternUnits="userSpaceOnUse" x="4" y="0" width="6" height="6"><g fill="#ebebeb"><rect x="5" y="0" width="1" height="1"/><rect x="4" y="1" width="1" height="1"/><rect x="3" y="2" width="1" height="1"/><rect x="2" y="3" width="1" height="1"/><rect x="1" y="4" width="1" height="1"/><rect x="0" y="5" width="1" height="1"/></g></pattern></defs><rect width="31" height="26" fill="url(#hp30)"/></svg><div style="position:absolute;left:2px;top:597px;width:29px;height:1px;background:#ABABAB"></div><div style="position:absolute;left:31px;top:572px;width:1px;height:26px;background:#ABABAB"></div><div class="t" style="left:8px;top:578px;font-size:13.6px;font-weight:bold;line-height:15px">20</div><div style="position:absolute;left:53px;top:572px;width:1314px;height:26px;background:linear-gradient(90deg,#FF0000 0px,#FFB400 1314px)"></div><div style="position:absolute;left:1368px;top:572px;width:384px;height:26px;background:#F0FFFF"></div><div style="position:absolute;left:1753px;top:572px;width:141px;height:26px;background:linear-gradient(90deg,#FFE800,#FFFF00 68%)"></div><div style="position:absolute;left:53px;top:597px;width:1841px;height:1px;background:#D3D3D3"></div><div style="position:absolute;left:233px;top:572px;width:1px;height:26px;background:#D3D3D3"></div><div style="position:absolute;left:910px;top:572px;width:1px;height:26px;background:#D3D3D3"></div><div style="position:absolute;left:1067px;top:572px;width:1px;height:26px;background:#D3D3D3"></div><div style="position:absolute;left:1171px;top:572px;width:1px;height:26px;background:#D3D3D3"></div><div style="position:absolute;left:1367px;top:572px;width:1px;height:26px;background:#D3D3D3"></div><div style="position:absolute;left:1752px;top:572px;width:1px;height:26px;background:#D3D3D3"></div><div style="position:absolute;left:52px;top:572px;width:1px;height:26px;background:#E4ECEC"></div><div class="t" style="left:57px;top:577px;font-size:12.6px;line-height:16px;color:#000">dtl</div><div class="t" style="left:238px;top:577px;font-size:12.6px;line-height:16px;color:#000;transform:scaleX(1.026);transform-origin:0 0">Đầu Trâu Lót</div><div class="t" style="left:915px;top:577px;font-size:12.6px;line-height:16px;color:#000">kg</div><div class="t" style="left:1068px;width:99px;text-align:right;top:577px;font-size:12.6px;line-height:16px;color:#000">512.</div><div class="t" style="left:1172px;width:191px;text-align:right;top:577px;font-size:12.6px;line-height:16px;color:#000">7,200</div><div class="t" style="left:1368px;width:381px;text-align:right;top:577px;font-size:12.6px;line-height:16px;color:#000">3,686,400</div><svg style="position:absolute;left:1817px;top:576px" width="16" height="17"><rect x="0.5" y="2.5" width="12" height="12" fill="#fff" stroke="#A8B0C4"/><path d="M2 8.5 L5.5 13.5 L12.5 1.5" fill="none" stroke="#000" stroke-width="1.8"/></svg><svg style="position:absolute;left:0px;top:598px" width="31" height="26" shape-rendering="crispEdges"><defs><pattern id="hp31" patternUnits="userSpaceOnUse" x="4" y="4" width="6" height="6"><g fill="#ebebeb"><rect x="5" y="0" width="1" height="1"/><rect x="4" y="1" width="1" height="1"/><rect x="3" y="2" width="1" height="1"/><rect x="2" y="3" width="1" height="1"/><rect x="1" y="4" width="1" height="1"/><rect x="0" y="5" width="1" height="1"/></g></pattern></defs><rect width="31" height="26" fill="url(#hp31)"/></svg><div style="position:absolute;left:2px;top:623px;width:29px;height:1px;background:#ABABAB"></div><div style="position:absolute;left:31px;top:598px;width:1px;height:26px;background:#ABABAB"></div><div class="t" style="left:8px;top:604px;font-size:13.6px;font-weight:bold;line-height:15px">21</div><div style="position:absolute;left:53px;top:598px;width:1314px;height:26px;background:linear-gradient(90deg,#FF0000 0px,#FFB400 1314px)"></div><div style="position:absolute;left:1368px;top:598px;width:384px;height:26px;background:#F0FFFF"></div><div style="position:absolute;left:1753px;top:598px;width:141px;height:26px;background:linear-gradient(90deg,#FFE800,#FFFF00 68%)"></div><div style="position:absolute;left:53px;top:623px;width:1841px;height:1px;background:#D3D3D3"></div><div style="position:absolute;left:233px;top:598px;width:1px;height:26px;background:#D3D3D3"></div><div style="position:absolute;left:910px;top:598px;width:1px;height:26px;background:#D3D3D3"></div><div style="position:absolute;left:1067px;top:598px;width:1px;height:26px;background:#D3D3D3"></div><div style="position:absolute;left:1171px;top:598px;width:1px;height:26px;background:#D3D3D3"></div><div style="position:absolute;left:1367px;top:598px;width:1px;height:26px;background:#D3D3D3"></div><div style="position:absolute;left:1752px;top:598px;width:1px;height:26px;background:#D3D3D3"></div><div style="position:absolute;left:52px;top:598px;width:1px;height:26px;background:#E4ECEC"></div><div class="t" style="left:57px;top:603px;font-size:12.6px;line-height:16px;color:#000">dt1055</div><div class="t" style="left:238px;top:603px;font-size:12.6px;line-height:16px;color:#000;transform:scaleX(1.042);transform-origin:0 0">Đầu Trâu lót thúc 10.5.5</div><div class="t" style="left:915px;top:603px;font-size:12.6px;line-height:16px;color:#000">kg</div><div class="t" style="left:1068px;width:99px;text-align:right;top:603px;font-size:12.6px;line-height:16px;color:#000">150.</div><div class="t" style="left:1172px;width:191px;text-align:right;top:603px;font-size:12.6px;line-height:16px;color:#000">6,320</div><div class="t" style="left:1368px;width:381px;text-align:right;top:603px;font-size:12.6px;line-height:16px;color:#000">948,000</div><svg style="position:absolute;left:1817px;top:602px" width="16" height="17"><rect x="0.5" y="2.5" width="12" height="12" fill="#fff" stroke="#A8B0C4"/><path d="M2 8.5 L5.5 13.5 L12.5 1.5" fill="none" stroke="#000" stroke-width="1.8"/></svg><svg style="position:absolute;left:0px;top:624px" width="31" height="26" shape-rendering="crispEdges"><defs><pattern id="hp32" patternUnits="userSpaceOnUse" x="4" y="2" width="6" height="6"><g fill="#ebebeb"><rect x="5" y="0" width="1" height="1"/><rect x="4" y="1" width="1" height="1"/><rect x="3" y="2" width="1" height="1"/><rect x="2" y="3" width="1" height="1"/><rect x="1" y="4" width="1" height="1"/><rect x="0" y="5" width="1" height="1"/></g></pattern></defs><rect width="31" height="26" fill="url(#hp32)"/></svg><div style="position:absolute;left:2px;top:649px;width:29px;height:1px;background:#ABABAB"></div><div style="position:absolute;left:31px;top:624px;width:1px;height:26px;background:#ABABAB"></div><div class="t" style="left:8px;top:630px;font-size:13.6px;font-weight:bold;line-height:15px">22</div><div style="position:absolute;left:53px;top:624px;width:1314px;height:26px;background:linear-gradient(90deg,#FF0000 0px,#FFB400 1314px)"></div><div style="position:absolute;left:1368px;top:624px;width:384px;height:26px;background:#F0FFFF"></div><div style="position:absolute;left:1753px;top:624px;width:141px;height:26px;background:linear-gradient(90deg,#FFE800,#FFFF00 68%)"></div><div style="position:absolute;left:53px;top:649px;width:1841px;height:1px;background:#D3D3D3"></div><div style="position:absolute;left:233px;top:624px;width:1px;height:26px;background:#D3D3D3"></div><div style="position:absolute;left:910px;top:624px;width:1px;height:26px;background:#D3D3D3"></div><div style="position:absolute;left:1067px;top:624px;width:1px;height:26px;background:#D3D3D3"></div><div style="position:absolute;left:1171px;top:624px;width:1px;height:26px;background:#D3D3D3"></div><div style="position:absolute;left:1367px;top:624px;width:1px;height:26px;background:#D3D3D3"></div><div style="position:absolute;left:1752px;top:624px;width:1px;height:26px;background:#D3D3D3"></div><div style="position:absolute;left:52px;top:624px;width:1px;height:26px;background:#E4ECEC"></div><div class="t" style="left:57px;top:629px;font-size:12.6px;line-height:16px;color:#000">dtnp</div><div class="t" style="left:238px;top:629px;font-size:12.6px;line-height:16px;color:#000;transform:scaleX(1.005);transform-origin:0 0">Đầu Trâu Nuôi Quả</div><div class="t" style="left:915px;top:629px;font-size:12.6px;line-height:16px;color:#000">kg</div><div class="t" style="left:1068px;width:99px;text-align:right;top:629px;font-size:12.6px;line-height:16px;color:#000">150.</div><div class="t" style="left:1172px;width:191px;text-align:right;top:629px;font-size:12.6px;line-height:16px;color:#000">10,250</div><div class="t" style="left:1368px;width:381px;text-align:right;top:629px;font-size:12.6px;line-height:16px;color:#000">1,537,500</div><svg style="position:absolute;left:1817px;top:628px" width="16" height="17"><rect x="0.5" y="2.5" width="12" height="12" fill="#fff" stroke="#A8B0C4"/><path d="M2 8.5 L5.5 13.5 L12.5 1.5" fill="none" stroke="#000" stroke-width="1.8"/></svg><svg style="position:absolute;left:0px;top:650px" width="31" height="26" shape-rendering="crispEdges"><defs><pattern id="hp33" patternUnits="userSpaceOnUse" x="4" y="0" width="6" height="6"><g fill="#ebebeb"><rect x="5" y="0" width="1" height="1"/><rect x="4" y="1" width="1" height="1"/><rect x="3" y="2" width="1" height="1"/><rect x="2" y="3" width="1" height="1"/><rect x="1" y="4" width="1" height="1"/><rect x="0" y="5" width="1" height="1"/></g></pattern></defs><rect width="31" height="26" fill="url(#hp33)"/></svg><div style="position:absolute;left:2px;top:675px;width:29px;height:1px;background:#ABABAB"></div><div style="position:absolute;left:31px;top:650px;width:1px;height:26px;background:#ABABAB"></div><div class="t" style="left:8px;top:656px;font-size:13.6px;font-weight:bold;line-height:15px">23</div><div style="position:absolute;left:1368px;top:650px;width:384px;height:26px;background:#F0FFFF"></div><div style="position:absolute;left:53px;top:675px;width:1841px;height:1px;background:#D3D3D3"></div><div style="position:absolute;left:233px;top:650px;width:1px;height:26px;background:#D3D3D3"></div><div style="position:absolute;left:910px;top:650px;width:1px;height:26px;background:#D3D3D3"></div><div style="position:absolute;left:1067px;top:650px;width:1px;height:26px;background:#D3D3D3"></div><div style="position:absolute;left:1171px;top:650px;width:1px;height:26px;background:#D3D3D3"></div><div style="position:absolute;left:1367px;top:650px;width:1px;height:26px;background:#D3D3D3"></div><div style="position:absolute;left:1752px;top:650px;width:1px;height:26px;background:#D3D3D3"></div><div style="position:absolute;left:52px;top:650px;width:1px;height:26px;background:#E4ECEC"></div><div class="t" style="left:57px;top:655px;font-size:12.6px;line-height:16px;color:#000">kldt</div><div class="t" style="left:238px;top:655px;font-size:12.6px;line-height:16px;color:#000;transform:scaleX(1.054);transform-origin:0 0">KaLi Đầu Trâu</div><div class="t" style="left:915px;top:655px;font-size:12.6px;line-height:16px;color:#000">kg</div><div class="t" style="left:1068px;width:99px;text-align:right;top:655px;font-size:12.6px;line-height:16px;color:#000">0.</div><div class="t" style="left:1172px;width:191px;text-align:right;top:655px;font-size:12.6px;line-height:16px;color:#000">7,250</div><div class="t" style="left:1368px;width:381px;text-align:right;top:655px;font-size:12.6px;line-height:16px;color:#000">0</div><svg style="position:absolute;left:1817px;top:656px" width="14" height="14"><rect x="0.5" y="0.5" width="12" height="12" fill="#fff" stroke="#B0B0B0"/></svg><svg style="position:absolute;left:0px;top:676px" width="31" height="26" shape-rendering="crispEdges"><defs><pattern id="hp34" patternUnits="userSpaceOnUse" x="4" y="4" width="6" height="6"><g fill="#ebebeb"><rect x="5" y="0" width="1" height="1"/><rect x="4" y="1" width="1" height="1"/><rect x="3" y="2" width="1" height="1"/><rect x="2" y="3" width="1" height="1"/><rect x="1" y="4" width="1" height="1"/><rect x="0" y="5" width="1" height="1"/></g></pattern></defs><rect width="31" height="26" fill="url(#hp34)"/></svg><div style="position:absolute;left:2px;top:701px;width:29px;height:1px;background:#ABABAB"></div><div style="position:absolute;left:31px;top:676px;width:1px;height:26px;background:#ABABAB"></div><div class="t" style="left:8px;top:682px;font-size:13.6px;font-weight:bold;line-height:15px">24</div><div style="position:absolute;left:1368px;top:676px;width:384px;height:26px;background:#F0FFFF"></div><div style="position:absolute;left:53px;top:701px;width:1841px;height:1px;background:#D3D3D3"></div><div style="position:absolute;left:233px;top:676px;width:1px;height:26px;background:#D3D3D3"></div><div style="position:absolute;left:910px;top:676px;width:1px;height:26px;background:#D3D3D3"></div><div style="position:absolute;left:1067px;top:676px;width:1px;height:26px;background:#D3D3D3"></div><div style="position:absolute;left:1171px;top:676px;width:1px;height:26px;background:#D3D3D3"></div><div style="position:absolute;left:1367px;top:676px;width:1px;height:26px;background:#D3D3D3"></div><div style="position:absolute;left:1752px;top:676px;width:1px;height:26px;background:#D3D3D3"></div><div style="position:absolute;left:52px;top:676px;width:1px;height:26px;background:#E4ECEC"></div><div class="t" style="left:57px;top:681px;font-size:12.6px;line-height:16px;color:#000">klspdt</div><div class="t" style="left:238px;top:681px;font-size:12.6px;line-height:16px;color:#000;transform:scaleX(1.019);transform-origin:0 0">KaLi Sunphat Đầu Trâu</div><div class="t" style="left:915px;top:681px;font-size:12.6px;line-height:16px;color:#000">kg</div><div class="t" style="left:1068px;width:99px;text-align:right;top:681px;font-size:12.6px;line-height:16px;color:#000">0.</div><div class="t" style="left:1172px;width:191px;text-align:right;top:681px;font-size:12.6px;line-height:16px;color:#000">15,000</div><div class="t" style="left:1368px;width:381px;text-align:right;top:681px;font-size:12.6px;line-height:16px;color:#000">0</div><svg style="position:absolute;left:1817px;top:682px" width="14" height="14"><rect x="0.5" y="0.5" width="12" height="12" fill="#fff" stroke="#B0B0B0"/></svg><svg style="position:absolute;left:0px;top:702px" width="31" height="26" shape-rendering="crispEdges"><defs><pattern id="hp35" patternUnits="userSpaceOnUse" x="4" y="2" width="6" height="6"><g fill="#ebebeb"><rect x="5" y="0" width="1" height="1"/><rect x="4" y="1" width="1" height="1"/><rect x="3" y="2" width="1" height="1"/><rect x="2" y="3" width="1" height="1"/><rect x="1" y="4" width="1" height="1"/><rect x="0" y="5" width="1" height="1"/></g></pattern></defs><rect width="31" height="26" fill="url(#hp35)"/></svg><div style="position:absolute;left:2px;top:727px;width:29px;height:1px;background:#ABABAB"></div><div style="position:absolute;left:31px;top:702px;width:1px;height:26px;background:#ABABAB"></div><div class="t" style="left:8px;top:708px;font-size:13.6px;font-weight:bold;line-height:15px">25</div><div style="position:absolute;left:1368px;top:702px;width:384px;height:26px;background:#F0FFFF"></div><div style="position:absolute;left:53px;top:727px;width:1841px;height:1px;background:#D3D3D3"></div><div style="position:absolute;left:233px;top:702px;width:1px;height:26px;background:#D3D3D3"></div><div style="position:absolute;left:910px;top:702px;width:1px;height:26px;background:#D3D3D3"></div><div style="position:absolute;left:1067px;top:702px;width:1px;height:26px;background:#D3D3D3"></div><div style="position:absolute;left:1171px;top:702px;width:1px;height:26px;background:#D3D3D3"></div><div style="position:absolute;left:1367px;top:702px;width:1px;height:26px;background:#D3D3D3"></div><div style="position:absolute;left:1752px;top:702px;width:1px;height:26px;background:#D3D3D3"></div><div style="position:absolute;left:52px;top:702px;width:1px;height:26px;background:#E4ECEC"></div><div class="t" style="left:57px;top:707px;font-size:12.6px;line-height:16px;color:#000">dtk</div><div class="t" style="left:238px;top:707px;font-size:12.6px;line-height:16px;color:#000;transform:scaleX(1.005);transform-origin:0 0">Khoáng Hữu cơ Đầu Trâu, Lân bột MK1</div><div class="t" style="left:915px;top:707px;font-size:12.6px;line-height:16px;color:#000">kg</div><div class="t" style="left:1068px;width:99px;text-align:right;top:707px;font-size:12.6px;line-height:16px;color:#000">0.</div><div class="t" style="left:1172px;width:191px;text-align:right;top:707px;font-size:12.6px;line-height:16px;color:#000">0</div><div class="t" style="left:1368px;width:381px;text-align:right;top:707px;font-size:12.6px;line-height:16px;color:#000">0</div><svg style="position:absolute;left:1817px;top:708px" width="14" height="14"><rect x="0.5" y="0.5" width="12" height="12" fill="#fff" stroke="#B0B0B0"/></svg></div>
<div style="left:1896px;top:229px;width:19px;height:744px;background:#fff"></div>
<div style="left:1897px;top:229px;width:1px;height:744px;background-image:repeating-linear-gradient(180deg,#c8c8c8 0 3px,transparent 3px 6px)"></div>
<svg style="left:1899px;top:233px" width="12" height="8"><path d="M1.5 6 L5.5 1.5 L9.5 6 Z" fill="#000"/></svg>
<svg style="left:1899px;top:961px" width="12" height="8"><path d="M1.5 1.5 L9.5 1.5 L5.5 6 Z" fill="#000"/></svg>
<div style="left:1896px;top:246px;width:16px;height:252px;border:1px solid #ABABAB"></div>
<svg style="position:absolute;left:1897px;top:247px" width="14" height="250" shape-rendering="crispEdges"><defs><pattern id="hp36" patternUnits="userSpaceOnUse" x="5" y="5" width="6" height="6"><g fill="#e6e6e6"><rect x="5" y="0" width="1" height="1"/><rect x="4" y="1" width="1" height="1"/><rect x="3" y="2" width="1" height="1"/><rect x="2" y="3" width="1" height="1"/><rect x="1" y="4" width="1" height="1"/><rect x="0" y="5" width="1" height="1"/></g></pattern></defs><rect width="14" height="250" fill="url(#hp36)"/></svg>
<div style="left:2px;top:973px;width:1913px;height:1px;background:#ABABAB"></div>
<svg style="position:absolute;left:3px;top:974px" width="1912" height="34" shape-rendering="crispEdges"><defs><pattern id="hp37" patternUnits="userSpaceOnUse" x="3" y="4" width="6" height="6"><g fill="#e8e8e8"><rect x="5" y="0" width="1" height="1"/><rect x="4" y="1" width="1" height="1"/><rect x="3" y="2" width="1" height="1"/><rect x="2" y="3" width="1" height="1"/><rect x="1" y="4" width="1" height="1"/><rect x="0" y="5" width="1" height="1"/></g></pattern></defs><rect width="1912" height="34" fill="url(#hp37)"/></svg>
<div style="left:1371px;top:976px;width:383px;height:28px;background:#fff"></div>
<div style="left:1371px;top:976px;width:383px;height:1px;background-image:repeating-linear-gradient(90deg,#b8b8b8 0 3px,transparent 3px 6px)"></div>
<div style="left:1371px;top:1003px;width:383px;height:1px;background-image:repeating-linear-gradient(90deg,#b8b8b8 0 3px,transparent 3px 6px)"></div>
<div style="left:1371px;top:976px;width:1px;height:28px;background-image:repeating-linear-gradient(180deg,#b8b8b8 0 3px,transparent 3px 6px)"></div>
<div style="left:1px;top:1008px;width:1917px;height:1px;background:#ABABAB"></div>
<div style="left:3px;top:1011px;width:1915px;height:1px;background:#ABABAB"></div>
<div style="left:0px;top:1013px;width:1920px;height:1px;background-image:repeating-linear-gradient(90deg,#b4b4b4 0 4px,transparent 4px 7px)"></div>
<div class="t" style="left:8px;top:1020px;font-size:11.75px;font-weight:bold;color:#111;line-height:14px">Chào mừng: Administrator đến với phần mềm MekongSoft</div>
<div style="left:348px;top:1020px;width:1px;height:14px;background:#B4B4B4"></div>
<div class="t" style="left:362px;top:1020px;font-size:12.1px;font-weight:bold;color:#111;line-height:14px">Version: 4.1.0</div>
<div style="left:451px;top:1020px;width:1px;height:14px;background:#B4B4B4"></div>
<div class="t" style="left:465px;top:1020px;font-size:12.3px;font-weight:bold;color:#F01010;line-height:14px">Ngày: 25/10/2023 5:18:45 CH</div>
<div style="left:1613px;top:1014px;width:1px;height:26px;background-image:repeating-linear-gradient(180deg,#b4b4b4 0 3px,transparent 3px 5px)"></div>
<div class="t" style="left:1623px;top:1020px;font-size:11.9px;font-weight:bold;color:#111;line-height:14px">@2023 MekongSoft. Thông tin hỗ trợ: 0901 000 508</div>
<div style="left:0px;top:1040px;width:1920px;height:2px;background:#DCE8F2"></div>
<svg style="left:493px;top:210px" width="15" height="22"><path d="M1.5 1.5 L1.5 17 L5.2 13.4 L8 19.5 L10.2 18.5 L7.6 12.6 L12.4 12.6 Z" fill="#fff" stroke="#000" stroke-width="1.1" stroke-linejoin="round"/></svg></body></html>
